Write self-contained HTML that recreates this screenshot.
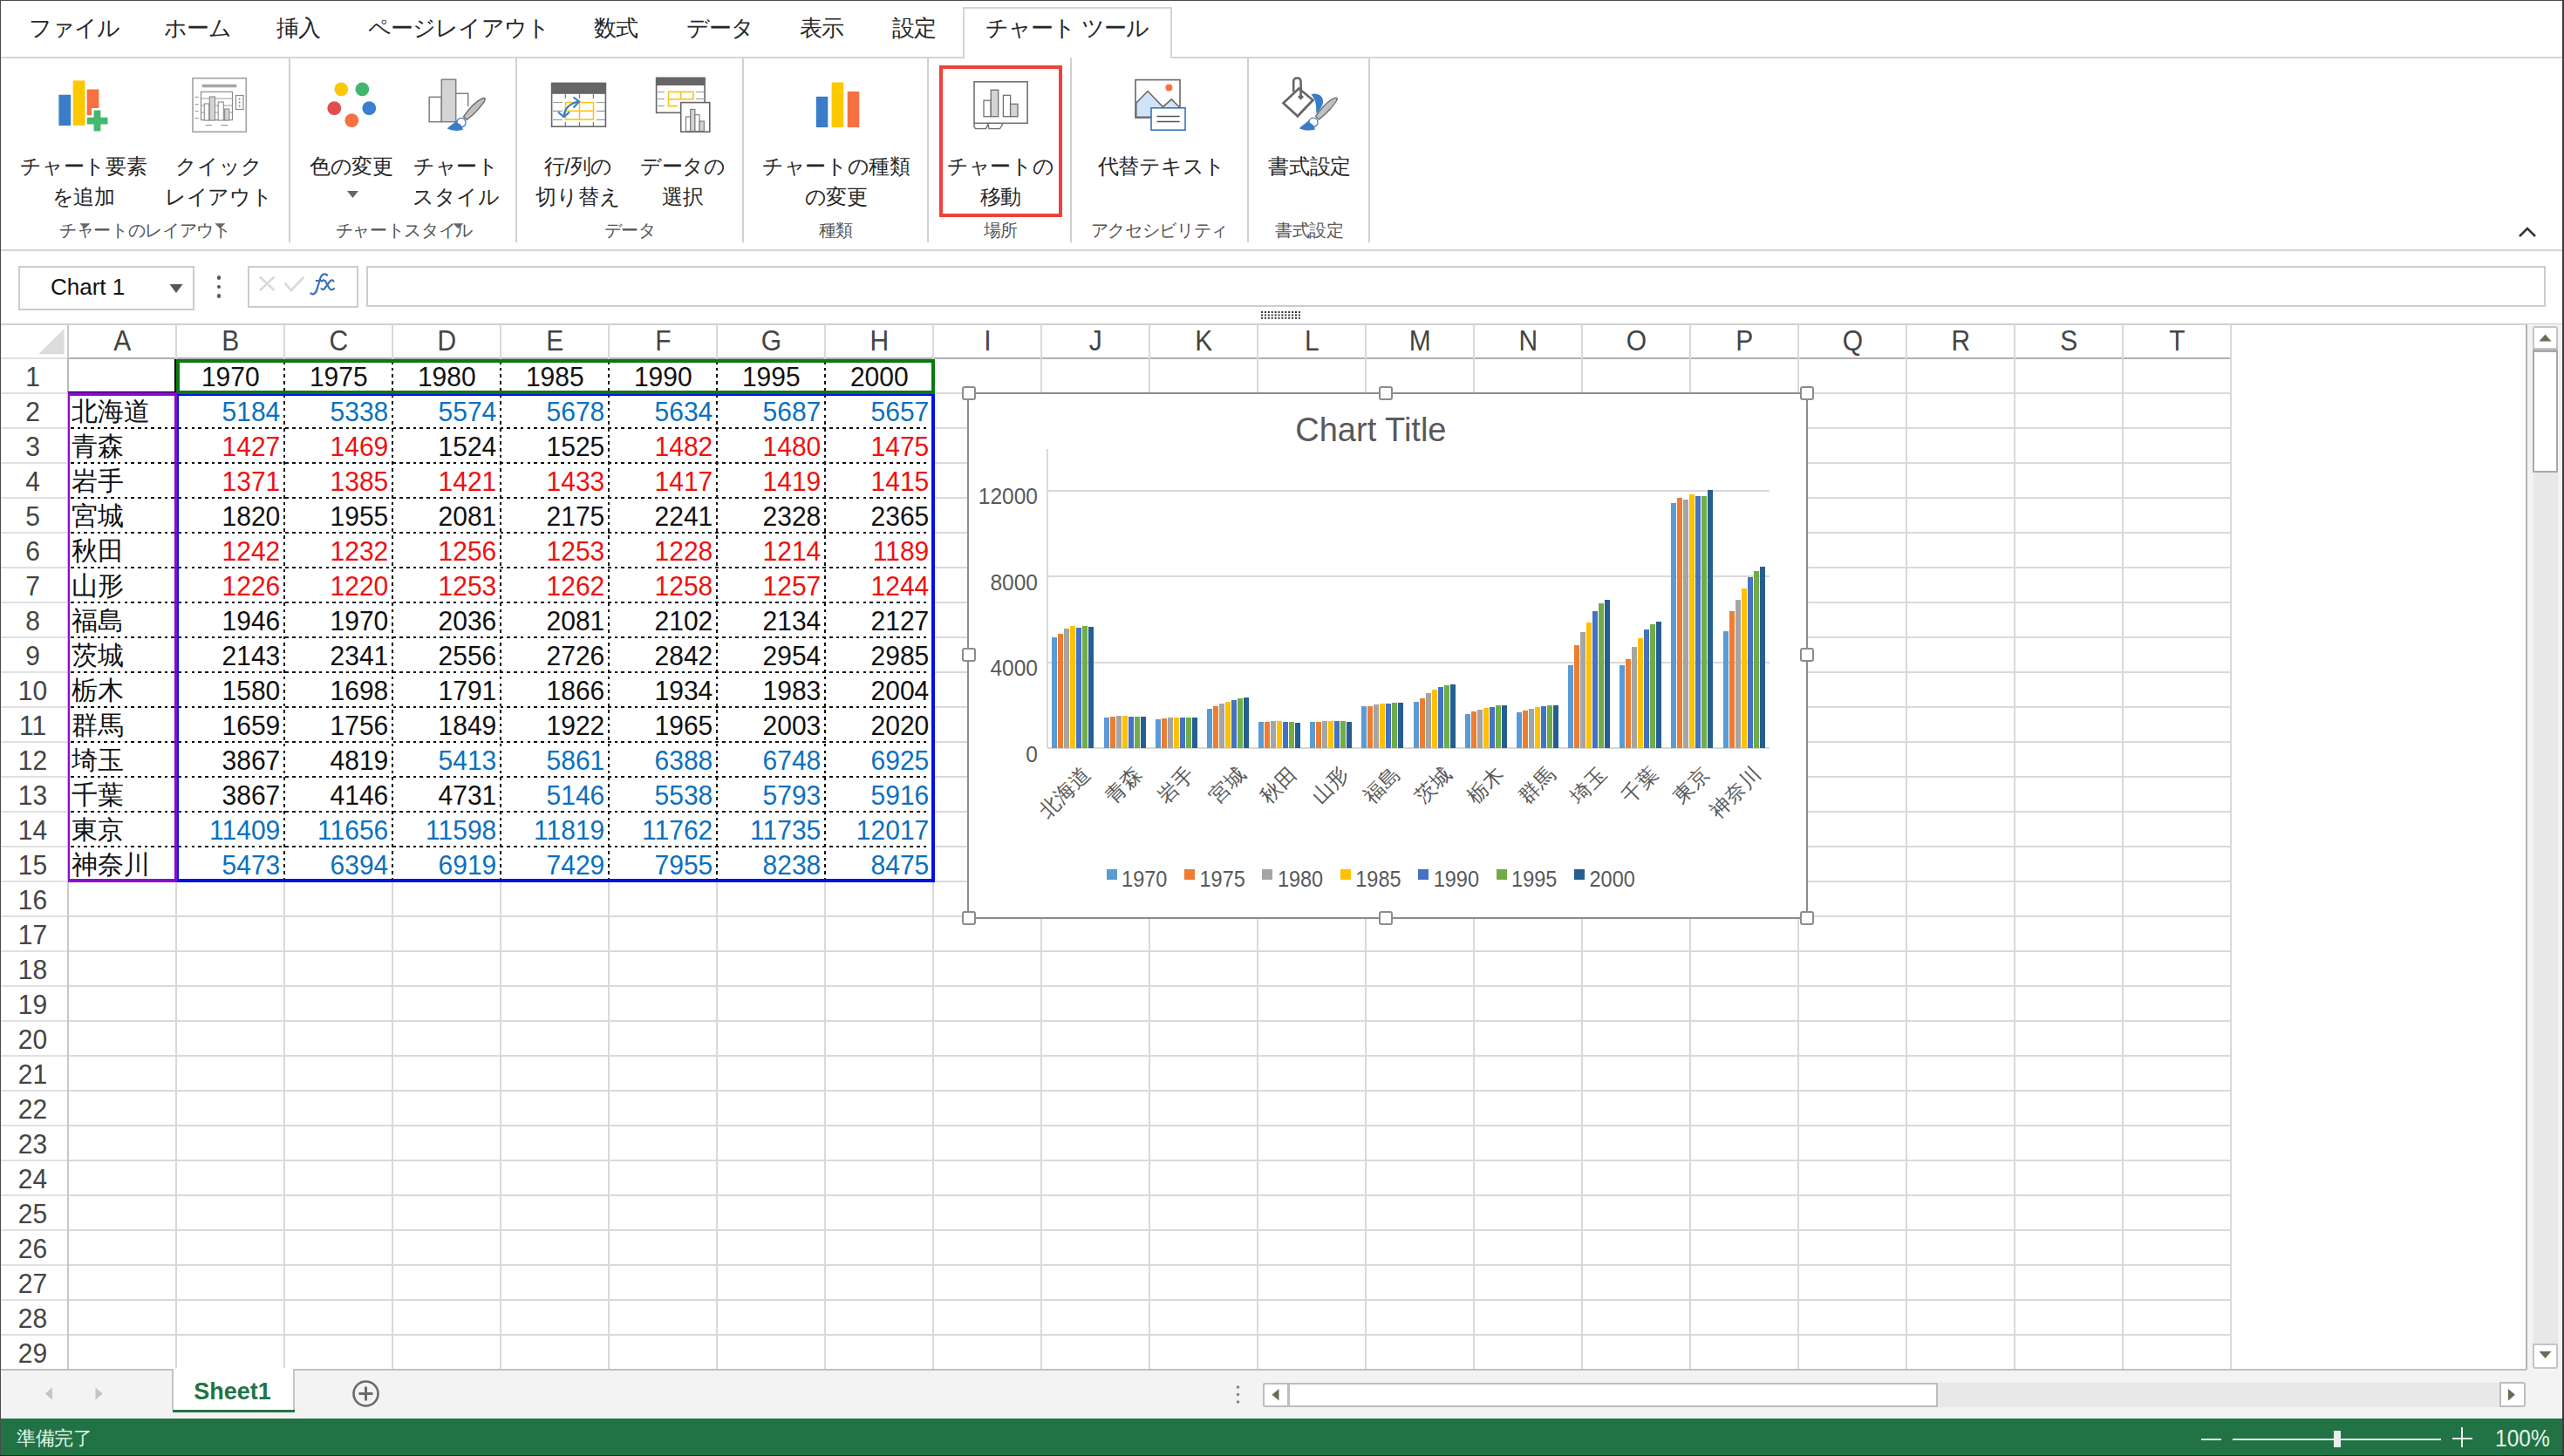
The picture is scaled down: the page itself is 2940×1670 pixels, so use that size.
<!DOCTYPE html>
<html><head><meta charset="utf-8"><style>
html,body{margin:0;padding:0;width:2940px;height:1670px;overflow:hidden;background:#fff;font-family:"Liberation Sans", sans-serif;}
#root>div,#root>svg{position:absolute;}
</style></head><body><div id="root" style="position:relative;width:2940px;height:1670px">
<div style="left:0.0px;top:64.5px;width:2940.0px;height:2.0px;background:#d5d5d5;"></div>
<div style="left:1104px;top:8px;width:240px;height:59px;box-sizing:border-box;border:2px solid #d5d5d5;border-bottom:none;background:#fff"></div>
<div style="left:32.8px;top:18.5px;font-size:26px;line-height:26px;color:#262626;white-space:nowrap;letter-spacing:-0.8px">ファイル</div>
<div style="left:187.5px;top:18.5px;font-size:26px;line-height:26px;color:#262626;white-space:nowrap;letter-spacing:-0.8px">ホーム</div>
<div style="left:316.5px;top:18.5px;font-size:26px;line-height:26px;color:#262626;white-space:nowrap;letter-spacing:-0.8px">挿入</div>
<div style="left:421.5px;top:18.5px;font-size:26px;line-height:26px;color:#262626;white-space:nowrap;letter-spacing:-0.8px">ページレイアウト</div>
<div style="left:681.0px;top:18.5px;font-size:26px;line-height:26px;color:#262626;white-space:nowrap;letter-spacing:-0.8px">数式</div>
<div style="left:786.5px;top:18.5px;font-size:26px;line-height:26px;color:#262626;white-space:nowrap;letter-spacing:-0.8px">データ</div>
<div style="left:917.0px;top:18.5px;font-size:26px;line-height:26px;color:#262626;white-space:nowrap;letter-spacing:-0.8px">表示</div>
<div style="left:1022.5px;top:18.5px;font-size:26px;line-height:26px;color:#262626;white-space:nowrap;letter-spacing:-0.8px">設定</div>
<div style="left:1129.5px;top:18.5px;font-size:26px;line-height:26px;color:#262626;white-space:nowrap;letter-spacing:-0.8px">チャート ツール</div>
<div style="left:0.0px;top:286.0px;width:2940.0px;height:2.0px;background:#d5d5d5;"></div>
<div style="left:331.3px;top:66.0px;width:2.0px;height:212.0px;background:#d0d0d0;"></div>
<div style="left:591.0px;top:66.0px;width:2.0px;height:212.0px;background:#d0d0d0;"></div>
<div style="left:851.2px;top:66.0px;width:2.0px;height:212.0px;background:#d0d0d0;"></div>
<div style="left:1063.4px;top:66.0px;width:2.0px;height:212.0px;background:#d0d0d0;"></div>
<div style="left:1227.2px;top:66.0px;width:2.0px;height:212.0px;background:#d0d0d0;"></div>
<div style="left:1430.0px;top:66.0px;width:2.0px;height:212.0px;background:#d0d0d0;"></div>
<div style="left:1569.2px;top:66.0px;width:2.0px;height:212.0px;background:#d0d0d0;"></div>
<div style="left:-54.0px;width:300px;text-align:center;top:179.5px;font-size:23.5px;line-height:23.5px;color:#262626;white-space:nowrap;letter-spacing:-0.3px;text-indent:-0.3px">チャート要素</div>
<div style="left:-54.0px;width:300px;text-align:center;top:214.5px;font-size:23.5px;line-height:23.5px;color:#262626;white-space:nowrap;letter-spacing:-0.3px;text-indent:-0.3px">を追加</div>
<div style="left:101.0px;width:300px;text-align:center;top:179.5px;font-size:23.5px;line-height:23.5px;color:#262626;white-space:nowrap;letter-spacing:-0.3px;text-indent:-0.3px">クイック</div>
<div style="left:101.0px;width:300px;text-align:center;top:214.5px;font-size:23.5px;line-height:23.5px;color:#262626;white-space:nowrap;letter-spacing:-0.3px;text-indent:-0.3px">レイアウト</div>
<div style="left:253.0px;width:300px;text-align:center;top:179.5px;font-size:23.5px;line-height:23.5px;color:#262626;white-space:nowrap;letter-spacing:-0.3px;text-indent:-0.3px">色の変更</div>
<div style="left:373.0px;width:300px;text-align:center;top:179.5px;font-size:23.5px;line-height:23.5px;color:#262626;white-space:nowrap;letter-spacing:-0.3px;text-indent:-0.3px">チャート</div>
<div style="left:373.0px;width:300px;text-align:center;top:214.5px;font-size:23.5px;line-height:23.5px;color:#262626;white-space:nowrap;letter-spacing:-0.3px;text-indent:-0.3px">スタイル</div>
<div style="left:513.0px;width:300px;text-align:center;top:179.5px;font-size:23.5px;line-height:23.5px;color:#262626;white-space:nowrap;letter-spacing:-0.3px;text-indent:-0.3px">行/列の</div>
<div style="left:513.0px;width:300px;text-align:center;top:214.5px;font-size:23.5px;line-height:23.5px;color:#262626;white-space:nowrap;letter-spacing:-0.3px;text-indent:-0.3px">切り替え</div>
<div style="left:633.0px;width:300px;text-align:center;top:179.5px;font-size:23.5px;line-height:23.5px;color:#262626;white-space:nowrap;letter-spacing:-0.3px;text-indent:-0.3px">データの</div>
<div style="left:633.0px;width:300px;text-align:center;top:214.5px;font-size:23.5px;line-height:23.5px;color:#262626;white-space:nowrap;letter-spacing:-0.3px;text-indent:-0.3px">選択</div>
<div style="left:809.0px;width:300px;text-align:center;top:179.5px;font-size:23.5px;line-height:23.5px;color:#262626;white-space:nowrap;letter-spacing:-0.3px;text-indent:-0.3px">チャートの種類</div>
<div style="left:809.0px;width:300px;text-align:center;top:214.5px;font-size:23.5px;line-height:23.5px;color:#262626;white-space:nowrap;letter-spacing:-0.3px;text-indent:-0.3px">の変更</div>
<div style="left:997.5px;width:300px;text-align:center;top:179.5px;font-size:23.5px;line-height:23.5px;color:#262626;white-space:nowrap;letter-spacing:-0.3px;text-indent:-0.3px">チャートの</div>
<div style="left:997.5px;width:300px;text-align:center;top:214.5px;font-size:23.5px;line-height:23.5px;color:#262626;white-space:nowrap;letter-spacing:-0.3px;text-indent:-0.3px">移動</div>
<div style="left:1182.0px;width:300px;text-align:center;top:179.5px;font-size:23.5px;line-height:23.5px;color:#262626;white-space:nowrap;letter-spacing:-0.3px;text-indent:-0.3px">代替テキスト</div>
<div style="left:1351.7px;width:300px;text-align:center;top:179.5px;font-size:23.5px;line-height:23.5px;color:#262626;white-space:nowrap;letter-spacing:-0.3px;text-indent:-0.3px">書式設定</div>
<div style="left:16.5px;width:300px;text-align:center;top:254.0px;font-size:20px;line-height:20px;color:#555;white-space:nowrap;letter-spacing:-0.3px;text-indent:-0.3px">チャートのレイアウト</div>
<div style="left:313.5px;width:300px;text-align:center;top:254.0px;font-size:20px;line-height:20px;color:#555;white-space:nowrap;letter-spacing:-0.3px;text-indent:-0.3px">チャートスタイル</div>
<div style="left:572.4px;width:300px;text-align:center;top:254.0px;font-size:20px;line-height:20px;color:#555;white-space:nowrap;letter-spacing:-0.3px;text-indent:-0.3px">データ</div>
<div style="left:808.6px;width:300px;text-align:center;top:254.0px;font-size:20px;line-height:20px;color:#555;white-space:nowrap;letter-spacing:-0.3px;text-indent:-0.3px">種類</div>
<div style="left:997.5px;width:300px;text-align:center;top:254.0px;font-size:20px;line-height:20px;color:#555;white-space:nowrap;letter-spacing:-0.3px;text-indent:-0.3px">場所</div>
<div style="left:1179.5px;width:300px;text-align:center;top:254.0px;font-size:20px;line-height:20px;color:#555;white-space:nowrap;letter-spacing:-0.3px;text-indent:-0.3px">アクセシビリティ</div>
<div style="left:1351.5px;width:300px;text-align:center;top:254.0px;font-size:20px;line-height:20px;color:#555;white-space:nowrap;letter-spacing:-0.3px;text-indent:-0.3px">書式設定</div>
<svg style="left:398px;top:219px" width="14" height="9"><path d="M0 0H13L6.5 8Z" fill="#666"/></svg>
<svg style="left:90.8px;top:255.5px" width="14" height="8"><path d="M0.3 0.3H12.3L6.3 6.3Z" fill="#666"/></svg>
<svg style="left:245.8px;top:255.5px" width="14" height="8"><path d="M0.3 0.3H12.3L6.3 6.3Z" fill="#666"/></svg>
<svg style="left:518.5px;top:255.5px" width="14" height="8"><path d="M0.3 0.3H12.3L6.3 6.3Z" fill="#666"/></svg>
<div style="left:1077.0px;top:75.0px;width:140.5px;height:173.5px;box-sizing:border-box;border:4px solid #f0413a;background:transparent;"></div>
<svg style="left:2886px;top:256px" width="24" height="18"><path d="M3 15L12 6L21 15" fill="none" stroke="#333" stroke-width="2.5"/></svg>

<svg style="left:0;top:0" width="1600" height="160">
 <!-- add chart element -->
 <rect x="67.4" y="108.7" width="13.8" height="35.4" fill="#3a7cc8"/>
 <rect x="83.7" y="92.4" width="13.8" height="51.7" fill="#fcc800"/>
 <path d="M99.7 102.5H113.4V124H105V132.2H99.7Z" fill="#f57142"/>
 <path d="M107.6 126.4H115.4V134.8H123.5V142.4H115.4V150.5H107.6V142.4H99.7V134.8H107.6Z" fill="#44b86f"/>
 <!-- quick layout -->
 <rect x="221" y="89.7" width="61.3" height="61.5" fill="none" stroke="#a6a6a6" stroke-width="1.7"/>
 <rect x="231.7" y="96.7" width="39.6" height="3.6" fill="#a6a6a6"/>
 <rect x="230.5" y="105.3" width="36" height="32.3" fill="none" stroke="#8a8a8a" stroke-width="1.2"/>
 <path d="M230.5 113H266.5M230.5 121H266.5M230.5 129H266.5" stroke="#9a9a9a" stroke-width="1"/>
 <rect x="234.3" y="119" width="5.4" height="19" fill="#fff" stroke="#8a8a8a" stroke-width="1.1"/>
 <rect x="240.3" y="111" width="6.2" height="27" fill="#d4d4d4" stroke="#8a8a8a" stroke-width="1.1"/>
 <rect x="250.2" y="117" width="6.1" height="21" fill="#fff" stroke="#8a8a8a" stroke-width="1.1"/>
 <rect x="257.6" y="125" width="5.2" height="13" fill="#d4d4d4" stroke="#8a8a8a" stroke-width="1.1"/>
 <path d="M223.6 111.4H227.5M223.6 119.6H227.5M223.6 127.5H227.5M223.6 135.6H227.5M235.6 143.6H243.2M253.3 143.6H261.5" stroke="#a0a0a0" stroke-width="1.2"/>
 <rect x="270.5" y="109.5" width="8.5" height="16" fill="none" stroke="#8a8a8a" stroke-width="1.2"/>
 <circle cx="274.7" cy="113.5" r="0.9" fill="#777"/><circle cx="274.7" cy="117.5" r="0.9" fill="#777"/><circle cx="274.7" cy="121.5" r="0.9" fill="#777"/>
 <!-- change colors -->
 <circle cx="391.3" cy="102.3" r="7.9" fill="#fcc800"/>
 <circle cx="415.4" cy="102.3" r="7.9" fill="#3fb86b"/>
 <circle cx="383.3" cy="124.2" r="7.9" fill="#e24d4d"/>
 <circle cx="423.3" cy="124.2" r="7.9" fill="#3b7fd0"/>
 <circle cx="403.3" cy="138.2" r="7.9" fill="#f57142"/>
 <!-- chart styles -->
 <path d="M536.7 122V107.3H522.7" fill="none" stroke="#808080" stroke-width="1.5"/>
 <rect x="492.2" y="111.3" width="14.1" height="28.4" fill="#fff" stroke="#808080" stroke-width="1.5"/>
 <rect x="506.3" y="91.2" width="16.4" height="48.5" fill="#d4d4d4" stroke="#808080" stroke-width="1.5"/>
 <g transform="translate(-977 0.3)">
 <path d="M1508.5 133.5C1515 124 1522 116 1530 112.5C1533.5 111.2 1534 113.5 1532.3 116C1527 124 1520 131 1512.5 137Z" fill="#c0c0c0" stroke="#666" stroke-width="1.3"/>
 <circle cx="1505.9" cy="140.3" r="5.2" fill="#fff" stroke="#3a7cc8" stroke-width="1.3"/>
 <path d="M1501.5 137.5C1498 141 1492.5 144 1489.8 147.3C1495 149.8 1502 150.2 1507.8 148.8C1507.5 145 1505.5 142 1501.5 140.5Z" fill="#3a7cc8"/>
 </g>
 <!-- switch row/col -->
 <rect x="632.6" y="95.4" width="61.8" height="49.8" fill="#fff" stroke="#666" stroke-width="1.6"/>
 <rect x="632.6" y="95.4" width="61.8" height="12.4" fill="#666"/>
 <path d="M634 117.5H645M684 117.5H694M634 127.3H645M684 127.3H694M634 137.3H645M684 137.3H694" stroke="#9a9a9a" stroke-width="1.2"/>
 <path d="M648.3 108V113M664.5 108V113M680.4 108V113M648.3 140V145M664.5 140V145M680.4 140V145" stroke="#777" stroke-width="1.2"/>
 <rect x="648.5" y="117.6" width="32" height="19.5" fill="none" stroke="#f5c518" stroke-width="1.6"/>
 <path d="M664.5 117.6V137.1M648.5 127.3H680.5" stroke="#f5c518" stroke-width="1.6"/>
 <path d="M646.5 133Q648 120 663 116.5" fill="none" stroke="#3a7cc8" stroke-width="2.2"/>
 <path d="M657.5 111.5L664 116.5L657.5 123.5M640 128.5L646.5 134L653 128.5" fill="none" stroke="#3a7cc8" stroke-width="2.2"/>
 <!-- select data -->
 <rect x="752.6" y="89.3" width="55.5" height="40" fill="#fff" stroke="#666" stroke-width="1.6"/>
 <rect x="752.6" y="89.3" width="55.5" height="8.7" fill="#666"/>
 <path d="M754 105.5H762M798 105.5H807M754 113.5H762M798 113.5H807M754 121.5H762" stroke="#9a9a9a" stroke-width="1.2"/>
 <rect x="766.5" y="105.3" width="28.4" height="8.5" fill="none" stroke="#f5c518" stroke-width="1.6"/>
 <path d="M780.7 105.3V113.8M766.5 113.8V121.6H777" fill="none" stroke="#f5c518" stroke-width="1.6"/>
 <rect x="780.7" y="117.6" width="33.1" height="33.6" fill="#fff" stroke="#666" stroke-width="1.6"/>
 <rect x="786.5" y="134" width="5.2" height="16.5" fill="#fff" stroke="#777" stroke-width="1.1"/>
 <rect x="791.7" y="125.4" width="5.2" height="25" fill="#d4d4d4" stroke="#777" stroke-width="1.1"/>
 <rect x="796.9" y="131.7" width="5.2" height="18.8" fill="#fff" stroke="#777" stroke-width="1.1"/>
 <rect x="802.1" y="139" width="5.2" height="11.5" fill="#d4d4d4" stroke="#777" stroke-width="1.1"/>
 <!-- change chart type -->
 <rect x="935.8" y="110.8" width="13.5" height="35.3" fill="#3a7cc8"/>
 <rect x="953.6" y="94.5" width="13.7" height="51.6" fill="#fcc800"/>
 <rect x="971.7" y="104.9" width="13.6" height="41.2" fill="#f57142"/>
 <!-- move chart -->
 <rect x="1117" y="93.8" width="61.1" height="47.5" fill="#fff" stroke="#707070" stroke-width="1.6"/>
 <rect x="1128" y="115.2" width="8.2" height="18.5" fill="#fff" stroke="#707070" stroke-width="1.3"/>
 <rect x="1136.2" y="103.2" width="8.5" height="30.5" fill="#d4d4d4" stroke="#707070" stroke-width="1.3"/>
 <rect x="1150.4" y="109.3" width="8.2" height="24.4" fill="#fff" stroke="#707070" stroke-width="1.3"/>
 <rect x="1158.6" y="119.3" width="8.4" height="14.4" fill="#d4d4d4" stroke="#707070" stroke-width="1.3"/>
 <path d="M1117 141.3V145.5L1118.5 147.6H1130.5L1133 142.5L1134 147.6H1146.5L1150 142" fill="none" stroke="#707070" stroke-width="1.4"/>
 <!-- alt text -->
 <rect x="1302" y="91.6" width="51" height="43.4" fill="#fff" stroke="#666" stroke-width="1.6"/>
 <path d="M1302.8 118.2L1316 104.6L1333.5 122.6L1343.3 113.9L1351.5 122V134.2H1302.8Z" fill="#cfe4f8" stroke="#666" stroke-width="1.5"/>
 <circle cx="1340.4" cy="100.5" r="4" fill="#f57142"/>
 <rect x="1320" y="123.8" width="39" height="25.4" fill="#fff" stroke="#3a74b5" stroke-width="1.6"/>
 <path d="M1326.4 133.5H1352.6M1326.4 139.5H1352.6" stroke="#555" stroke-width="1.5"/>
 <!-- format -->
 <path d="M1471.5 118.2L1489.3 101.5L1505.5 114.8L1487.9 133.3Z" fill="#fff" stroke="#666" stroke-width="2.7"/>
 <path d="M1483.2 105.5V94Q1483.2 89.5 1487.4 89.5Q1491.6 89.5 1491.6 94V100L1491.5 113" fill="none" stroke="#666" stroke-width="2.6"/>
 <path d="M1488 111L1491.5 114.8L1495 111L1491.5 108Z" fill="#666"/>
 <path d="M1503.5 108C1511 106 1518 110 1517 118C1516 123 1512 127 1509.5 131C1509 125 1509.5 120 1507.5 114.5Z" fill="#3a7cc8"/>
 <path d="M1508.5 133.5C1515 124 1522 116 1530 112.5C1533.5 111.2 1534 113.5 1532.3 116C1527 124 1520 131 1512.5 137Z" fill="#c0c0c0" stroke="#666" stroke-width="1.3"/>
 <circle cx="1505.9" cy="140.3" r="5.2" fill="#fff" stroke="#3a7cc8" stroke-width="1.3"/>
 <path d="M1501.5 137.5C1498 141 1492.5 144 1489.8 147.3C1495 149.8 1502 150.2 1507.8 148.8C1507.5 145 1505.5 142 1501.5 140.5Z" fill="#3a7cc8"/>
</svg>

<div style="left:20.5px;top:305.0px;width:202.0px;height:50.5px;box-sizing:border-box;border:2px solid #cdcdcd;background:#fff;"></div>
<div style="left:58.0px;top:316.0px;font-size:26px;line-height:26px;color:#111;white-space:nowrap;">Chart 1</div>
<svg style="left:194px;top:325px" width="17" height="13"><path d="M0.5 1H15.5L8 11Z" fill="#555"/></svg>
<div style="left:249.0px;top:316.3px;width:4.4px;height:4.4px;background:#555;border-radius:50%"></div>
<div style="left:249.0px;top:326.8px;width:4.4px;height:4.4px;background:#555;border-radius:50%"></div>
<div style="left:249.0px;top:337.3px;width:4.4px;height:4.4px;background:#555;border-radius:50%"></div>
<div style="left:284.0px;top:305.0px;width:127.0px;height:47.5px;box-sizing:border-box;border:2px solid #cdcdcd;background:#fff;"></div>
<svg style="left:290px;top:310px" width="110" height="36"><path d="M8 7.5L24.5 23M24.5 7.5L8 23" stroke="#d9d9d9" stroke-width="2.6"/><path d="M36.5 14.5L44 23L58.5 7.5" fill="none" stroke="#d9d9d9" stroke-width="2.6"/></svg>
<svg style="left:350px;top:310px" width="40" height="32"><g fill="none" stroke="#3a73bb" stroke-linecap="round"><path d="M6.5 26.5C9 28.5 12.5 27 14 20L17.5 8.5C19 4 22.5 3.5 25 5.5" stroke-width="2.3"/><path d="M12.5 12H20" stroke-width="1.8"/><path d="M19 12.5C21 10.5 23 11.5 24 14L27.5 20.5C29 23 31 22.8 33 21" stroke-width="2.2"/><path d="M32.5 12.5C31.5 10.8 29.5 11 28 13L22.5 20.5C21 22.5 19.5 22.5 18.5 21" stroke-width="2.2"/></g></svg>
<div style="left:420.0px;top:305.0px;width:2499.0px;height:47.0px;box-sizing:border-box;border:2px solid #cdcdcd;background:#fff;"></div>
<svg style="left:1444px;top:355px" width="52" height="11"><rect x="2.0" y="2.0" width="2" height="2" fill="#333"/><rect x="2.0" y="5.4" width="2" height="2" fill="#333"/><rect x="2.0" y="8.8" width="2" height="2" fill="#333"/><rect x="5.9" y="2.0" width="2" height="2" fill="#333"/><rect x="5.9" y="5.4" width="2" height="2" fill="#333"/><rect x="5.9" y="8.8" width="2" height="2" fill="#333"/><rect x="9.8" y="2.0" width="2" height="2" fill="#333"/><rect x="9.8" y="5.4" width="2" height="2" fill="#333"/><rect x="9.8" y="8.8" width="2" height="2" fill="#333"/><rect x="13.7" y="2.0" width="2" height="2" fill="#333"/><rect x="13.7" y="5.4" width="2" height="2" fill="#333"/><rect x="13.7" y="8.8" width="2" height="2" fill="#333"/><rect x="17.6" y="2.0" width="2" height="2" fill="#333"/><rect x="17.6" y="5.4" width="2" height="2" fill="#333"/><rect x="17.6" y="8.8" width="2" height="2" fill="#333"/><rect x="21.5" y="2.0" width="2" height="2" fill="#333"/><rect x="21.5" y="5.4" width="2" height="2" fill="#333"/><rect x="21.5" y="8.8" width="2" height="2" fill="#333"/><rect x="25.4" y="2.0" width="2" height="2" fill="#333"/><rect x="25.4" y="5.4" width="2" height="2" fill="#333"/><rect x="25.4" y="8.8" width="2" height="2" fill="#333"/><rect x="29.3" y="2.0" width="2" height="2" fill="#333"/><rect x="29.3" y="5.4" width="2" height="2" fill="#333"/><rect x="29.3" y="8.8" width="2" height="2" fill="#333"/><rect x="33.2" y="2.0" width="2" height="2" fill="#333"/><rect x="33.2" y="5.4" width="2" height="2" fill="#333"/><rect x="33.2" y="8.8" width="2" height="2" fill="#333"/><rect x="37.1" y="2.0" width="2" height="2" fill="#333"/><rect x="37.1" y="5.4" width="2" height="2" fill="#333"/><rect x="37.1" y="8.8" width="2" height="2" fill="#333"/><rect x="41.0" y="2.0" width="2" height="2" fill="#333"/><rect x="41.0" y="5.4" width="2" height="2" fill="#333"/><rect x="41.0" y="8.8" width="2" height="2" fill="#333"/><rect x="44.9" y="2.0" width="2" height="2" fill="#333"/><rect x="44.9" y="5.4" width="2" height="2" fill="#333"/><rect x="44.9" y="8.8" width="2" height="2" fill="#333"/></svg>
<div style="left:0.0px;top:370.5px;width:2940.0px;height:2.0px;background:#d0d0d0;"></div>
<div style="left:78.3px;top:410.3px;width:2480.0px;height:2.0px;background:#d9d9d9;"></div>
<div style="left:0.0px;top:410.3px;width:78.3px;height:2.0px;background:#e1e1e1;"></div>
<div style="left:78.3px;top:450.3px;width:2480.0px;height:2.0px;background:#d9d9d9;"></div>
<div style="left:0.0px;top:450.3px;width:78.3px;height:2.0px;background:#e1e1e1;"></div>
<div style="left:78.3px;top:490.3px;width:2480.0px;height:2.0px;background:#d9d9d9;"></div>
<div style="left:0.0px;top:490.3px;width:78.3px;height:2.0px;background:#e1e1e1;"></div>
<div style="left:78.3px;top:530.3px;width:2480.0px;height:2.0px;background:#d9d9d9;"></div>
<div style="left:0.0px;top:530.3px;width:78.3px;height:2.0px;background:#e1e1e1;"></div>
<div style="left:78.3px;top:570.3px;width:2480.0px;height:2.0px;background:#d9d9d9;"></div>
<div style="left:0.0px;top:570.3px;width:78.3px;height:2.0px;background:#e1e1e1;"></div>
<div style="left:78.3px;top:610.2px;width:2480.0px;height:2.0px;background:#d9d9d9;"></div>
<div style="left:0.0px;top:610.2px;width:78.3px;height:2.0px;background:#e1e1e1;"></div>
<div style="left:78.3px;top:650.2px;width:2480.0px;height:2.0px;background:#d9d9d9;"></div>
<div style="left:0.0px;top:650.2px;width:78.3px;height:2.0px;background:#e1e1e1;"></div>
<div style="left:78.3px;top:690.2px;width:2480.0px;height:2.0px;background:#d9d9d9;"></div>
<div style="left:0.0px;top:690.2px;width:78.3px;height:2.0px;background:#e1e1e1;"></div>
<div style="left:78.3px;top:730.2px;width:2480.0px;height:2.0px;background:#d9d9d9;"></div>
<div style="left:0.0px;top:730.2px;width:78.3px;height:2.0px;background:#e1e1e1;"></div>
<div style="left:78.3px;top:770.2px;width:2480.0px;height:2.0px;background:#d9d9d9;"></div>
<div style="left:0.0px;top:770.2px;width:78.3px;height:2.0px;background:#e1e1e1;"></div>
<div style="left:78.3px;top:810.2px;width:2480.0px;height:2.0px;background:#d9d9d9;"></div>
<div style="left:0.0px;top:810.2px;width:78.3px;height:2.0px;background:#e1e1e1;"></div>
<div style="left:78.3px;top:850.2px;width:2480.0px;height:2.0px;background:#d9d9d9;"></div>
<div style="left:0.0px;top:850.2px;width:78.3px;height:2.0px;background:#e1e1e1;"></div>
<div style="left:78.3px;top:890.2px;width:2480.0px;height:2.0px;background:#d9d9d9;"></div>
<div style="left:0.0px;top:890.2px;width:78.3px;height:2.0px;background:#e1e1e1;"></div>
<div style="left:78.3px;top:930.2px;width:2480.0px;height:2.0px;background:#d9d9d9;"></div>
<div style="left:0.0px;top:930.2px;width:78.3px;height:2.0px;background:#e1e1e1;"></div>
<div style="left:78.3px;top:970.2px;width:2480.0px;height:2.0px;background:#d9d9d9;"></div>
<div style="left:0.0px;top:970.2px;width:78.3px;height:2.0px;background:#e1e1e1;"></div>
<div style="left:78.3px;top:1010.2px;width:2480.0px;height:2.0px;background:#d9d9d9;"></div>
<div style="left:0.0px;top:1010.2px;width:78.3px;height:2.0px;background:#e1e1e1;"></div>
<div style="left:78.3px;top:1050.1px;width:2480.0px;height:2.0px;background:#d9d9d9;"></div>
<div style="left:0.0px;top:1050.1px;width:78.3px;height:2.0px;background:#e1e1e1;"></div>
<div style="left:78.3px;top:1090.1px;width:2480.0px;height:2.0px;background:#d9d9d9;"></div>
<div style="left:0.0px;top:1090.1px;width:78.3px;height:2.0px;background:#e1e1e1;"></div>
<div style="left:78.3px;top:1130.1px;width:2480.0px;height:2.0px;background:#d9d9d9;"></div>
<div style="left:0.0px;top:1130.1px;width:78.3px;height:2.0px;background:#e1e1e1;"></div>
<div style="left:78.3px;top:1170.1px;width:2480.0px;height:2.0px;background:#d9d9d9;"></div>
<div style="left:0.0px;top:1170.1px;width:78.3px;height:2.0px;background:#e1e1e1;"></div>
<div style="left:78.3px;top:1210.1px;width:2480.0px;height:2.0px;background:#d9d9d9;"></div>
<div style="left:0.0px;top:1210.1px;width:78.3px;height:2.0px;background:#e1e1e1;"></div>
<div style="left:78.3px;top:1250.1px;width:2480.0px;height:2.0px;background:#d9d9d9;"></div>
<div style="left:0.0px;top:1250.1px;width:78.3px;height:2.0px;background:#e1e1e1;"></div>
<div style="left:78.3px;top:1290.1px;width:2480.0px;height:2.0px;background:#d9d9d9;"></div>
<div style="left:0.0px;top:1290.1px;width:78.3px;height:2.0px;background:#e1e1e1;"></div>
<div style="left:78.3px;top:1330.1px;width:2480.0px;height:2.0px;background:#d9d9d9;"></div>
<div style="left:0.0px;top:1330.1px;width:78.3px;height:2.0px;background:#e1e1e1;"></div>
<div style="left:78.3px;top:1370.1px;width:2480.0px;height:2.0px;background:#d9d9d9;"></div>
<div style="left:0.0px;top:1370.1px;width:78.3px;height:2.0px;background:#e1e1e1;"></div>
<div style="left:78.3px;top:1410.0px;width:2480.0px;height:2.0px;background:#d9d9d9;"></div>
<div style="left:0.0px;top:1410.0px;width:78.3px;height:2.0px;background:#e1e1e1;"></div>
<div style="left:78.3px;top:1450.0px;width:2480.0px;height:2.0px;background:#d9d9d9;"></div>
<div style="left:0.0px;top:1450.0px;width:78.3px;height:2.0px;background:#e1e1e1;"></div>
<div style="left:78.3px;top:1490.0px;width:2480.0px;height:2.0px;background:#d9d9d9;"></div>
<div style="left:0.0px;top:1490.0px;width:78.3px;height:2.0px;background:#e1e1e1;"></div>
<div style="left:78.3px;top:1530.0px;width:2480.0px;height:2.0px;background:#d9d9d9;"></div>
<div style="left:0.0px;top:1530.0px;width:78.3px;height:2.0px;background:#e1e1e1;"></div>
<div style="left:78.3px;top:1570.0px;width:2480.0px;height:2.0px;background:#d9d9d9;"></div>
<div style="left:0.0px;top:1570.0px;width:78.3px;height:2.0px;background:#e1e1e1;"></div>
<div style="left:78.3px;top:410.1px;width:2480.0px;height:2.4px;background:#b0b0b0;"></div>
<div style="left:77.3px;top:372.0px;width:2.0px;height:1199.0px;background:#d9d9d9;"></div>
<div style="left:201.3px;top:372.0px;width:2.0px;height:1199.0px;background:#d9d9d9;"></div>
<div style="left:325.3px;top:372.0px;width:2.0px;height:1199.0px;background:#d9d9d9;"></div>
<div style="left:449.3px;top:372.0px;width:2.0px;height:1199.0px;background:#d9d9d9;"></div>
<div style="left:573.3px;top:372.0px;width:2.0px;height:1199.0px;background:#d9d9d9;"></div>
<div style="left:697.3px;top:372.0px;width:2.0px;height:1199.0px;background:#d9d9d9;"></div>
<div style="left:821.3px;top:372.0px;width:2.0px;height:1199.0px;background:#d9d9d9;"></div>
<div style="left:945.3px;top:372.0px;width:2.0px;height:1199.0px;background:#d9d9d9;"></div>
<div style="left:1069.3px;top:372.0px;width:2.0px;height:1199.0px;background:#d9d9d9;"></div>
<div style="left:1193.3px;top:372.0px;width:2.0px;height:1199.0px;background:#d9d9d9;"></div>
<div style="left:1317.3px;top:372.0px;width:2.0px;height:1199.0px;background:#d9d9d9;"></div>
<div style="left:1441.3px;top:372.0px;width:2.0px;height:1199.0px;background:#d9d9d9;"></div>
<div style="left:1565.3px;top:372.0px;width:2.0px;height:1199.0px;background:#d9d9d9;"></div>
<div style="left:1689.3px;top:372.0px;width:2.0px;height:1199.0px;background:#d9d9d9;"></div>
<div style="left:1813.3px;top:372.0px;width:2.0px;height:1199.0px;background:#d9d9d9;"></div>
<div style="left:1937.3px;top:372.0px;width:2.0px;height:1199.0px;background:#d9d9d9;"></div>
<div style="left:2061.3px;top:372.0px;width:2.0px;height:1199.0px;background:#d9d9d9;"></div>
<div style="left:2185.3px;top:372.0px;width:2.0px;height:1199.0px;background:#d9d9d9;"></div>
<div style="left:2309.3px;top:372.0px;width:2.0px;height:1199.0px;background:#d9d9d9;"></div>
<div style="left:2433.3px;top:372.0px;width:2.0px;height:1199.0px;background:#d9d9d9;"></div>
<div style="left:2557.3px;top:372.0px;width:2.0px;height:1199.0px;background:#d9d9d9;"></div>
<div style="left:77.3px;top:372.0px;width:2.0px;height:1199.0px;background:#c8c8c8;"></div>
<svg style="left:40px;top:374px" width="36" height="36"><path d="M4 32.2H33.6V2.9Z" fill="#dcdcdc"/></svg>
<div style="left:80.3px;width:120px;text-align:center;top:375.5px;font-size:30px;line-height:30px;color:#444;white-space:nowrap;transform:scaleY(1.08)">A</div>
<div style="left:204.3px;width:120px;text-align:center;top:375.5px;font-size:30px;line-height:30px;color:#444;white-space:nowrap;transform:scaleY(1.08)">B</div>
<div style="left:328.3px;width:120px;text-align:center;top:375.5px;font-size:30px;line-height:30px;color:#444;white-space:nowrap;transform:scaleY(1.08)">C</div>
<div style="left:452.3px;width:120px;text-align:center;top:375.5px;font-size:30px;line-height:30px;color:#444;white-space:nowrap;transform:scaleY(1.08)">D</div>
<div style="left:576.3px;width:120px;text-align:center;top:375.5px;font-size:30px;line-height:30px;color:#444;white-space:nowrap;transform:scaleY(1.08)">E</div>
<div style="left:700.3px;width:120px;text-align:center;top:375.5px;font-size:30px;line-height:30px;color:#444;white-space:nowrap;transform:scaleY(1.08)">F</div>
<div style="left:824.3px;width:120px;text-align:center;top:375.5px;font-size:30px;line-height:30px;color:#444;white-space:nowrap;transform:scaleY(1.08)">G</div>
<div style="left:948.3px;width:120px;text-align:center;top:375.5px;font-size:30px;line-height:30px;color:#444;white-space:nowrap;transform:scaleY(1.08)">H</div>
<div style="left:1072.3px;width:120px;text-align:center;top:375.5px;font-size:30px;line-height:30px;color:#444;white-space:nowrap;transform:scaleY(1.08)">I</div>
<div style="left:1196.3px;width:120px;text-align:center;top:375.5px;font-size:30px;line-height:30px;color:#444;white-space:nowrap;transform:scaleY(1.08)">J</div>
<div style="left:1320.3px;width:120px;text-align:center;top:375.5px;font-size:30px;line-height:30px;color:#444;white-space:nowrap;transform:scaleY(1.08)">K</div>
<div style="left:1444.3px;width:120px;text-align:center;top:375.5px;font-size:30px;line-height:30px;color:#444;white-space:nowrap;transform:scaleY(1.08)">L</div>
<div style="left:1568.3px;width:120px;text-align:center;top:375.5px;font-size:30px;line-height:30px;color:#444;white-space:nowrap;transform:scaleY(1.08)">M</div>
<div style="left:1692.3px;width:120px;text-align:center;top:375.5px;font-size:30px;line-height:30px;color:#444;white-space:nowrap;transform:scaleY(1.08)">N</div>
<div style="left:1816.3px;width:120px;text-align:center;top:375.5px;font-size:30px;line-height:30px;color:#444;white-space:nowrap;transform:scaleY(1.08)">O</div>
<div style="left:1940.3px;width:120px;text-align:center;top:375.5px;font-size:30px;line-height:30px;color:#444;white-space:nowrap;transform:scaleY(1.08)">P</div>
<div style="left:2064.3px;width:120px;text-align:center;top:375.5px;font-size:30px;line-height:30px;color:#444;white-space:nowrap;transform:scaleY(1.08)">Q</div>
<div style="left:2188.3px;width:120px;text-align:center;top:375.5px;font-size:30px;line-height:30px;color:#444;white-space:nowrap;transform:scaleY(1.08)">R</div>
<div style="left:2312.3px;width:120px;text-align:center;top:375.5px;font-size:30px;line-height:30px;color:#444;white-space:nowrap;transform:scaleY(1.08)">S</div>
<div style="left:2436.3px;width:120px;text-align:center;top:375.5px;font-size:30px;line-height:30px;color:#444;white-space:nowrap;transform:scaleY(1.08)">T</div>
<div style="left:-0.5px;width:76px;text-align:center;top:416.8px;font-size:30px;line-height:30px;color:#444;white-space:nowrap;transform:scaleY(1.07)">1</div>
<div style="left:-0.5px;width:76px;text-align:center;top:456.8px;font-size:30px;line-height:30px;color:#444;white-space:nowrap;transform:scaleY(1.07)">2</div>
<div style="left:-0.5px;width:76px;text-align:center;top:496.8px;font-size:30px;line-height:30px;color:#444;white-space:nowrap;transform:scaleY(1.07)">3</div>
<div style="left:-0.5px;width:76px;text-align:center;top:536.8px;font-size:30px;line-height:30px;color:#444;white-space:nowrap;transform:scaleY(1.07)">4</div>
<div style="left:-0.5px;width:76px;text-align:center;top:576.8px;font-size:30px;line-height:30px;color:#444;white-space:nowrap;transform:scaleY(1.07)">5</div>
<div style="left:-0.5px;width:76px;text-align:center;top:616.8px;font-size:30px;line-height:30px;color:#444;white-space:nowrap;transform:scaleY(1.07)">6</div>
<div style="left:-0.5px;width:76px;text-align:center;top:656.7px;font-size:30px;line-height:30px;color:#444;white-space:nowrap;transform:scaleY(1.07)">7</div>
<div style="left:-0.5px;width:76px;text-align:center;top:696.7px;font-size:30px;line-height:30px;color:#444;white-space:nowrap;transform:scaleY(1.07)">8</div>
<div style="left:-0.5px;width:76px;text-align:center;top:736.7px;font-size:30px;line-height:30px;color:#444;white-space:nowrap;transform:scaleY(1.07)">9</div>
<div style="left:-0.5px;width:76px;text-align:center;top:776.7px;font-size:30px;line-height:30px;color:#444;white-space:nowrap;transform:scaleY(1.07)">10</div>
<div style="left:-0.5px;width:76px;text-align:center;top:816.7px;font-size:30px;line-height:30px;color:#444;white-space:nowrap;transform:scaleY(1.07)">11</div>
<div style="left:-0.5px;width:76px;text-align:center;top:856.7px;font-size:30px;line-height:30px;color:#444;white-space:nowrap;transform:scaleY(1.07)">12</div>
<div style="left:-0.5px;width:76px;text-align:center;top:896.7px;font-size:30px;line-height:30px;color:#444;white-space:nowrap;transform:scaleY(1.07)">13</div>
<div style="left:-0.5px;width:76px;text-align:center;top:936.7px;font-size:30px;line-height:30px;color:#444;white-space:nowrap;transform:scaleY(1.07)">14</div>
<div style="left:-0.5px;width:76px;text-align:center;top:976.7px;font-size:30px;line-height:30px;color:#444;white-space:nowrap;transform:scaleY(1.07)">15</div>
<div style="left:-0.5px;width:76px;text-align:center;top:1016.7px;font-size:30px;line-height:30px;color:#444;white-space:nowrap;transform:scaleY(1.07)">16</div>
<div style="left:-0.5px;width:76px;text-align:center;top:1056.6px;font-size:30px;line-height:30px;color:#444;white-space:nowrap;transform:scaleY(1.07)">17</div>
<div style="left:-0.5px;width:76px;text-align:center;top:1096.6px;font-size:30px;line-height:30px;color:#444;white-space:nowrap;transform:scaleY(1.07)">18</div>
<div style="left:-0.5px;width:76px;text-align:center;top:1136.6px;font-size:30px;line-height:30px;color:#444;white-space:nowrap;transform:scaleY(1.07)">19</div>
<div style="left:-0.5px;width:76px;text-align:center;top:1176.6px;font-size:30px;line-height:30px;color:#444;white-space:nowrap;transform:scaleY(1.07)">20</div>
<div style="left:-0.5px;width:76px;text-align:center;top:1216.6px;font-size:30px;line-height:30px;color:#444;white-space:nowrap;transform:scaleY(1.07)">21</div>
<div style="left:-0.5px;width:76px;text-align:center;top:1256.6px;font-size:30px;line-height:30px;color:#444;white-space:nowrap;transform:scaleY(1.07)">22</div>
<div style="left:-0.5px;width:76px;text-align:center;top:1296.6px;font-size:30px;line-height:30px;color:#444;white-space:nowrap;transform:scaleY(1.07)">23</div>
<div style="left:-0.5px;width:76px;text-align:center;top:1336.6px;font-size:30px;line-height:30px;color:#444;white-space:nowrap;transform:scaleY(1.07)">24</div>
<div style="left:-0.5px;width:76px;text-align:center;top:1376.6px;font-size:30px;line-height:30px;color:#444;white-space:nowrap;transform:scaleY(1.07)">25</div>
<div style="left:-0.5px;width:76px;text-align:center;top:1416.5px;font-size:30px;line-height:30px;color:#444;white-space:nowrap;transform:scaleY(1.07)">26</div>
<div style="left:-0.5px;width:76px;text-align:center;top:1456.5px;font-size:30px;line-height:30px;color:#444;white-space:nowrap;transform:scaleY(1.07)">27</div>
<div style="left:-0.5px;width:76px;text-align:center;top:1496.5px;font-size:30px;line-height:30px;color:#444;white-space:nowrap;transform:scaleY(1.07)">28</div>
<div style="left:-0.5px;width:76px;text-align:center;top:1536.5px;font-size:30px;line-height:30px;color:#444;white-space:nowrap;transform:scaleY(1.07)">29</div>
<div style="left:79.3px;top:412.3px;width:990.0px;height:597.9px;background:#fff;"></div>
<div style="left:81.3px;top:490.3px;width:986.0px;height:2px;background:repeating-linear-gradient(90deg,#111 0 3.6px,transparent 3.6px 7.7px)"></div>
<div style="left:81.3px;top:530.3px;width:986.0px;height:2px;background:repeating-linear-gradient(90deg,#111 0 3.6px,transparent 3.6px 7.7px)"></div>
<div style="left:81.3px;top:570.3px;width:986.0px;height:2px;background:repeating-linear-gradient(90deg,#111 0 3.6px,transparent 3.6px 7.7px)"></div>
<div style="left:81.3px;top:610.2px;width:986.0px;height:2px;background:repeating-linear-gradient(90deg,#111 0 3.6px,transparent 3.6px 7.7px)"></div>
<div style="left:81.3px;top:650.2px;width:986.0px;height:2px;background:repeating-linear-gradient(90deg,#111 0 3.6px,transparent 3.6px 7.7px)"></div>
<div style="left:81.3px;top:690.2px;width:986.0px;height:2px;background:repeating-linear-gradient(90deg,#111 0 3.6px,transparent 3.6px 7.7px)"></div>
<div style="left:81.3px;top:730.2px;width:986.0px;height:2px;background:repeating-linear-gradient(90deg,#111 0 3.6px,transparent 3.6px 7.7px)"></div>
<div style="left:81.3px;top:770.2px;width:986.0px;height:2px;background:repeating-linear-gradient(90deg,#111 0 3.6px,transparent 3.6px 7.7px)"></div>
<div style="left:81.3px;top:810.2px;width:986.0px;height:2px;background:repeating-linear-gradient(90deg,#111 0 3.6px,transparent 3.6px 7.7px)"></div>
<div style="left:81.3px;top:850.2px;width:986.0px;height:2px;background:repeating-linear-gradient(90deg,#111 0 3.6px,transparent 3.6px 7.7px)"></div>
<div style="left:81.3px;top:890.2px;width:986.0px;height:2px;background:repeating-linear-gradient(90deg,#111 0 3.6px,transparent 3.6px 7.7px)"></div>
<div style="left:81.3px;top:930.2px;width:986.0px;height:2px;background:repeating-linear-gradient(90deg,#111 0 3.6px,transparent 3.6px 7.7px)"></div>
<div style="left:81.3px;top:970.2px;width:986.0px;height:2px;background:repeating-linear-gradient(90deg,#111 0 3.6px,transparent 3.6px 7.7px)"></div>
<div style="left:325.3px;top:414.3px;width:2px;height:593.9px;background:repeating-linear-gradient(180deg,#111 0 3.6px,transparent 3.6px 7.7px)"></div>
<div style="left:449.3px;top:414.3px;width:2px;height:593.9px;background:repeating-linear-gradient(180deg,#111 0 3.6px,transparent 3.6px 7.7px)"></div>
<div style="left:573.3px;top:414.3px;width:2px;height:593.9px;background:repeating-linear-gradient(180deg,#111 0 3.6px,transparent 3.6px 7.7px)"></div>
<div style="left:697.3px;top:414.3px;width:2px;height:593.9px;background:repeating-linear-gradient(180deg,#111 0 3.6px,transparent 3.6px 7.7px)"></div>
<div style="left:821.3px;top:414.3px;width:2px;height:593.9px;background:repeating-linear-gradient(180deg,#111 0 3.6px,transparent 3.6px 7.7px)"></div>
<div style="left:945.3px;top:414.3px;width:2px;height:593.9px;background:repeating-linear-gradient(180deg,#111 0 3.6px,transparent 3.6px 7.7px)"></div>
<div style="left:77.3px;top:411.3px;width:2.0px;height:40.0px;background:#bbb;"></div>
<div style="left:199.8px;top:412.3px;width:2.5px;height:39.0px;background:#000;"></div>
<div style="left:78.3px;top:448.8px;width:124.0px;height:2.5px;background:#000;"></div>
<div style="left:202.3px;top:411.8px;width:869.5px;height:40.5px;box-sizing:border-box;border:4px solid #0a7a10;background:transparent;"></div>
<div style="left:78.3px;top:450.3px;width:126.0px;height:561.9px;box-sizing:border-box;border:2.5px solid #8a0ad0;border-top-width:4px;border-right-width:4px;border-bottom-width:4px"></div>
<div style="left:203.3px;top:452.3px;width:868.5px;height:559.9px;box-sizing:border-box;border:2.5px solid #0010e8;border-left-width:2.5px;border-top-width:2.5px;border-right-width:4px;border-bottom-width:4px"></div>
<div style="left:204.3px;width:120px;text-align:center;top:417.3px;font-size:30px;line-height:30px;color:#111;white-space:nowrap;transform:scaleY(1.07)">1970</div>
<div style="left:328.3px;width:120px;text-align:center;top:417.3px;font-size:30px;line-height:30px;color:#111;white-space:nowrap;transform:scaleY(1.07)">1975</div>
<div style="left:452.3px;width:120px;text-align:center;top:417.3px;font-size:30px;line-height:30px;color:#111;white-space:nowrap;transform:scaleY(1.07)">1980</div>
<div style="left:576.3px;width:120px;text-align:center;top:417.3px;font-size:30px;line-height:30px;color:#111;white-space:nowrap;transform:scaleY(1.07)">1985</div>
<div style="left:700.3px;width:120px;text-align:center;top:417.3px;font-size:30px;line-height:30px;color:#111;white-space:nowrap;transform:scaleY(1.07)">1990</div>
<div style="left:824.3px;width:120px;text-align:center;top:417.3px;font-size:30px;line-height:30px;color:#111;white-space:nowrap;transform:scaleY(1.07)">1995</div>
<div style="left:948.3px;width:120px;text-align:center;top:417.3px;font-size:30px;line-height:30px;color:#111;white-space:nowrap;transform:scaleY(1.07)">2000</div>
<div style="left:82.3px;top:456.8px;font-size:29.5px;line-height:29.5px;color:#111;white-space:nowrap;">北海道</div>
<div style="left:201.3px;width:120px;text-align:right;top:457.3px;font-size:30px;line-height:30px;color:#0a70c0;white-space:nowrap;transform:scaleY(1.07)">5184</div>
<div style="left:325.3px;width:120px;text-align:right;top:457.3px;font-size:30px;line-height:30px;color:#0a70c0;white-space:nowrap;transform:scaleY(1.07)">5338</div>
<div style="left:449.3px;width:120px;text-align:right;top:457.3px;font-size:30px;line-height:30px;color:#0a70c0;white-space:nowrap;transform:scaleY(1.07)">5574</div>
<div style="left:573.3px;width:120px;text-align:right;top:457.3px;font-size:30px;line-height:30px;color:#0a70c0;white-space:nowrap;transform:scaleY(1.07)">5678</div>
<div style="left:697.3px;width:120px;text-align:right;top:457.3px;font-size:30px;line-height:30px;color:#0a70c0;white-space:nowrap;transform:scaleY(1.07)">5634</div>
<div style="left:821.3px;width:120px;text-align:right;top:457.3px;font-size:30px;line-height:30px;color:#0a70c0;white-space:nowrap;transform:scaleY(1.07)">5687</div>
<div style="left:945.3px;width:120px;text-align:right;top:457.3px;font-size:30px;line-height:30px;color:#0a70c0;white-space:nowrap;transform:scaleY(1.07)">5657</div>
<div style="left:82.3px;top:496.8px;font-size:29.5px;line-height:29.5px;color:#111;white-space:nowrap;">青森</div>
<div style="left:201.3px;width:120px;text-align:right;top:497.3px;font-size:30px;line-height:30px;color:#ee1111;white-space:nowrap;transform:scaleY(1.07)">1427</div>
<div style="left:325.3px;width:120px;text-align:right;top:497.3px;font-size:30px;line-height:30px;color:#ee1111;white-space:nowrap;transform:scaleY(1.07)">1469</div>
<div style="left:449.3px;width:120px;text-align:right;top:497.3px;font-size:30px;line-height:30px;color:#111;white-space:nowrap;transform:scaleY(1.07)">1524</div>
<div style="left:573.3px;width:120px;text-align:right;top:497.3px;font-size:30px;line-height:30px;color:#111;white-space:nowrap;transform:scaleY(1.07)">1525</div>
<div style="left:697.3px;width:120px;text-align:right;top:497.3px;font-size:30px;line-height:30px;color:#ee1111;white-space:nowrap;transform:scaleY(1.07)">1482</div>
<div style="left:821.3px;width:120px;text-align:right;top:497.3px;font-size:30px;line-height:30px;color:#ee1111;white-space:nowrap;transform:scaleY(1.07)">1480</div>
<div style="left:945.3px;width:120px;text-align:right;top:497.3px;font-size:30px;line-height:30px;color:#ee1111;white-space:nowrap;transform:scaleY(1.07)">1475</div>
<div style="left:82.3px;top:536.8px;font-size:29.5px;line-height:29.5px;color:#111;white-space:nowrap;">岩手</div>
<div style="left:201.3px;width:120px;text-align:right;top:537.3px;font-size:30px;line-height:30px;color:#ee1111;white-space:nowrap;transform:scaleY(1.07)">1371</div>
<div style="left:325.3px;width:120px;text-align:right;top:537.3px;font-size:30px;line-height:30px;color:#ee1111;white-space:nowrap;transform:scaleY(1.07)">1385</div>
<div style="left:449.3px;width:120px;text-align:right;top:537.3px;font-size:30px;line-height:30px;color:#ee1111;white-space:nowrap;transform:scaleY(1.07)">1421</div>
<div style="left:573.3px;width:120px;text-align:right;top:537.3px;font-size:30px;line-height:30px;color:#ee1111;white-space:nowrap;transform:scaleY(1.07)">1433</div>
<div style="left:697.3px;width:120px;text-align:right;top:537.3px;font-size:30px;line-height:30px;color:#ee1111;white-space:nowrap;transform:scaleY(1.07)">1417</div>
<div style="left:821.3px;width:120px;text-align:right;top:537.3px;font-size:30px;line-height:30px;color:#ee1111;white-space:nowrap;transform:scaleY(1.07)">1419</div>
<div style="left:945.3px;width:120px;text-align:right;top:537.3px;font-size:30px;line-height:30px;color:#ee1111;white-space:nowrap;transform:scaleY(1.07)">1415</div>
<div style="left:82.3px;top:576.8px;font-size:29.5px;line-height:29.5px;color:#111;white-space:nowrap;">宮城</div>
<div style="left:201.3px;width:120px;text-align:right;top:577.3px;font-size:30px;line-height:30px;color:#111;white-space:nowrap;transform:scaleY(1.07)">1820</div>
<div style="left:325.3px;width:120px;text-align:right;top:577.3px;font-size:30px;line-height:30px;color:#111;white-space:nowrap;transform:scaleY(1.07)">1955</div>
<div style="left:449.3px;width:120px;text-align:right;top:577.3px;font-size:30px;line-height:30px;color:#111;white-space:nowrap;transform:scaleY(1.07)">2081</div>
<div style="left:573.3px;width:120px;text-align:right;top:577.3px;font-size:30px;line-height:30px;color:#111;white-space:nowrap;transform:scaleY(1.07)">2175</div>
<div style="left:697.3px;width:120px;text-align:right;top:577.3px;font-size:30px;line-height:30px;color:#111;white-space:nowrap;transform:scaleY(1.07)">2241</div>
<div style="left:821.3px;width:120px;text-align:right;top:577.3px;font-size:30px;line-height:30px;color:#111;white-space:nowrap;transform:scaleY(1.07)">2328</div>
<div style="left:945.3px;width:120px;text-align:right;top:577.3px;font-size:30px;line-height:30px;color:#111;white-space:nowrap;transform:scaleY(1.07)">2365</div>
<div style="left:82.3px;top:616.8px;font-size:29.5px;line-height:29.5px;color:#111;white-space:nowrap;">秋田</div>
<div style="left:201.3px;width:120px;text-align:right;top:617.2px;font-size:30px;line-height:30px;color:#ee1111;white-space:nowrap;transform:scaleY(1.07)">1242</div>
<div style="left:325.3px;width:120px;text-align:right;top:617.2px;font-size:30px;line-height:30px;color:#ee1111;white-space:nowrap;transform:scaleY(1.07)">1232</div>
<div style="left:449.3px;width:120px;text-align:right;top:617.2px;font-size:30px;line-height:30px;color:#ee1111;white-space:nowrap;transform:scaleY(1.07)">1256</div>
<div style="left:573.3px;width:120px;text-align:right;top:617.2px;font-size:30px;line-height:30px;color:#ee1111;white-space:nowrap;transform:scaleY(1.07)">1253</div>
<div style="left:697.3px;width:120px;text-align:right;top:617.2px;font-size:30px;line-height:30px;color:#ee1111;white-space:nowrap;transform:scaleY(1.07)">1228</div>
<div style="left:821.3px;width:120px;text-align:right;top:617.2px;font-size:30px;line-height:30px;color:#ee1111;white-space:nowrap;transform:scaleY(1.07)">1214</div>
<div style="left:945.3px;width:120px;text-align:right;top:617.2px;font-size:30px;line-height:30px;color:#ee1111;white-space:nowrap;transform:scaleY(1.07)">1189</div>
<div style="left:82.3px;top:656.7px;font-size:29.5px;line-height:29.5px;color:#111;white-space:nowrap;">山形</div>
<div style="left:201.3px;width:120px;text-align:right;top:657.2px;font-size:30px;line-height:30px;color:#ee1111;white-space:nowrap;transform:scaleY(1.07)">1226</div>
<div style="left:325.3px;width:120px;text-align:right;top:657.2px;font-size:30px;line-height:30px;color:#ee1111;white-space:nowrap;transform:scaleY(1.07)">1220</div>
<div style="left:449.3px;width:120px;text-align:right;top:657.2px;font-size:30px;line-height:30px;color:#ee1111;white-space:nowrap;transform:scaleY(1.07)">1253</div>
<div style="left:573.3px;width:120px;text-align:right;top:657.2px;font-size:30px;line-height:30px;color:#ee1111;white-space:nowrap;transform:scaleY(1.07)">1262</div>
<div style="left:697.3px;width:120px;text-align:right;top:657.2px;font-size:30px;line-height:30px;color:#ee1111;white-space:nowrap;transform:scaleY(1.07)">1258</div>
<div style="left:821.3px;width:120px;text-align:right;top:657.2px;font-size:30px;line-height:30px;color:#ee1111;white-space:nowrap;transform:scaleY(1.07)">1257</div>
<div style="left:945.3px;width:120px;text-align:right;top:657.2px;font-size:30px;line-height:30px;color:#ee1111;white-space:nowrap;transform:scaleY(1.07)">1244</div>
<div style="left:82.3px;top:696.7px;font-size:29.5px;line-height:29.5px;color:#111;white-space:nowrap;">福島</div>
<div style="left:201.3px;width:120px;text-align:right;top:697.2px;font-size:30px;line-height:30px;color:#111;white-space:nowrap;transform:scaleY(1.07)">1946</div>
<div style="left:325.3px;width:120px;text-align:right;top:697.2px;font-size:30px;line-height:30px;color:#111;white-space:nowrap;transform:scaleY(1.07)">1970</div>
<div style="left:449.3px;width:120px;text-align:right;top:697.2px;font-size:30px;line-height:30px;color:#111;white-space:nowrap;transform:scaleY(1.07)">2036</div>
<div style="left:573.3px;width:120px;text-align:right;top:697.2px;font-size:30px;line-height:30px;color:#111;white-space:nowrap;transform:scaleY(1.07)">2081</div>
<div style="left:697.3px;width:120px;text-align:right;top:697.2px;font-size:30px;line-height:30px;color:#111;white-space:nowrap;transform:scaleY(1.07)">2102</div>
<div style="left:821.3px;width:120px;text-align:right;top:697.2px;font-size:30px;line-height:30px;color:#111;white-space:nowrap;transform:scaleY(1.07)">2134</div>
<div style="left:945.3px;width:120px;text-align:right;top:697.2px;font-size:30px;line-height:30px;color:#111;white-space:nowrap;transform:scaleY(1.07)">2127</div>
<div style="left:82.3px;top:736.7px;font-size:29.5px;line-height:29.5px;color:#111;white-space:nowrap;">茨城</div>
<div style="left:201.3px;width:120px;text-align:right;top:737.2px;font-size:30px;line-height:30px;color:#111;white-space:nowrap;transform:scaleY(1.07)">2143</div>
<div style="left:325.3px;width:120px;text-align:right;top:737.2px;font-size:30px;line-height:30px;color:#111;white-space:nowrap;transform:scaleY(1.07)">2341</div>
<div style="left:449.3px;width:120px;text-align:right;top:737.2px;font-size:30px;line-height:30px;color:#111;white-space:nowrap;transform:scaleY(1.07)">2556</div>
<div style="left:573.3px;width:120px;text-align:right;top:737.2px;font-size:30px;line-height:30px;color:#111;white-space:nowrap;transform:scaleY(1.07)">2726</div>
<div style="left:697.3px;width:120px;text-align:right;top:737.2px;font-size:30px;line-height:30px;color:#111;white-space:nowrap;transform:scaleY(1.07)">2842</div>
<div style="left:821.3px;width:120px;text-align:right;top:737.2px;font-size:30px;line-height:30px;color:#111;white-space:nowrap;transform:scaleY(1.07)">2954</div>
<div style="left:945.3px;width:120px;text-align:right;top:737.2px;font-size:30px;line-height:30px;color:#111;white-space:nowrap;transform:scaleY(1.07)">2985</div>
<div style="left:82.3px;top:776.7px;font-size:29.5px;line-height:29.5px;color:#111;white-space:nowrap;">栃木</div>
<div style="left:201.3px;width:120px;text-align:right;top:777.2px;font-size:30px;line-height:30px;color:#111;white-space:nowrap;transform:scaleY(1.07)">1580</div>
<div style="left:325.3px;width:120px;text-align:right;top:777.2px;font-size:30px;line-height:30px;color:#111;white-space:nowrap;transform:scaleY(1.07)">1698</div>
<div style="left:449.3px;width:120px;text-align:right;top:777.2px;font-size:30px;line-height:30px;color:#111;white-space:nowrap;transform:scaleY(1.07)">1791</div>
<div style="left:573.3px;width:120px;text-align:right;top:777.2px;font-size:30px;line-height:30px;color:#111;white-space:nowrap;transform:scaleY(1.07)">1866</div>
<div style="left:697.3px;width:120px;text-align:right;top:777.2px;font-size:30px;line-height:30px;color:#111;white-space:nowrap;transform:scaleY(1.07)">1934</div>
<div style="left:821.3px;width:120px;text-align:right;top:777.2px;font-size:30px;line-height:30px;color:#111;white-space:nowrap;transform:scaleY(1.07)">1983</div>
<div style="left:945.3px;width:120px;text-align:right;top:777.2px;font-size:30px;line-height:30px;color:#111;white-space:nowrap;transform:scaleY(1.07)">2004</div>
<div style="left:82.3px;top:816.7px;font-size:29.5px;line-height:29.5px;color:#111;white-space:nowrap;">群馬</div>
<div style="left:201.3px;width:120px;text-align:right;top:817.2px;font-size:30px;line-height:30px;color:#111;white-space:nowrap;transform:scaleY(1.07)">1659</div>
<div style="left:325.3px;width:120px;text-align:right;top:817.2px;font-size:30px;line-height:30px;color:#111;white-space:nowrap;transform:scaleY(1.07)">1756</div>
<div style="left:449.3px;width:120px;text-align:right;top:817.2px;font-size:30px;line-height:30px;color:#111;white-space:nowrap;transform:scaleY(1.07)">1849</div>
<div style="left:573.3px;width:120px;text-align:right;top:817.2px;font-size:30px;line-height:30px;color:#111;white-space:nowrap;transform:scaleY(1.07)">1922</div>
<div style="left:697.3px;width:120px;text-align:right;top:817.2px;font-size:30px;line-height:30px;color:#111;white-space:nowrap;transform:scaleY(1.07)">1965</div>
<div style="left:821.3px;width:120px;text-align:right;top:817.2px;font-size:30px;line-height:30px;color:#111;white-space:nowrap;transform:scaleY(1.07)">2003</div>
<div style="left:945.3px;width:120px;text-align:right;top:817.2px;font-size:30px;line-height:30px;color:#111;white-space:nowrap;transform:scaleY(1.07)">2020</div>
<div style="left:82.3px;top:856.7px;font-size:29.5px;line-height:29.5px;color:#111;white-space:nowrap;">埼玉</div>
<div style="left:201.3px;width:120px;text-align:right;top:857.2px;font-size:30px;line-height:30px;color:#111;white-space:nowrap;transform:scaleY(1.07)">3867</div>
<div style="left:325.3px;width:120px;text-align:right;top:857.2px;font-size:30px;line-height:30px;color:#111;white-space:nowrap;transform:scaleY(1.07)">4819</div>
<div style="left:449.3px;width:120px;text-align:right;top:857.2px;font-size:30px;line-height:30px;color:#0a70c0;white-space:nowrap;transform:scaleY(1.07)">5413</div>
<div style="left:573.3px;width:120px;text-align:right;top:857.2px;font-size:30px;line-height:30px;color:#0a70c0;white-space:nowrap;transform:scaleY(1.07)">5861</div>
<div style="left:697.3px;width:120px;text-align:right;top:857.2px;font-size:30px;line-height:30px;color:#0a70c0;white-space:nowrap;transform:scaleY(1.07)">6388</div>
<div style="left:821.3px;width:120px;text-align:right;top:857.2px;font-size:30px;line-height:30px;color:#0a70c0;white-space:nowrap;transform:scaleY(1.07)">6748</div>
<div style="left:945.3px;width:120px;text-align:right;top:857.2px;font-size:30px;line-height:30px;color:#0a70c0;white-space:nowrap;transform:scaleY(1.07)">6925</div>
<div style="left:82.3px;top:896.7px;font-size:29.5px;line-height:29.5px;color:#111;white-space:nowrap;">千葉</div>
<div style="left:201.3px;width:120px;text-align:right;top:897.2px;font-size:30px;line-height:30px;color:#111;white-space:nowrap;transform:scaleY(1.07)">3867</div>
<div style="left:325.3px;width:120px;text-align:right;top:897.2px;font-size:30px;line-height:30px;color:#111;white-space:nowrap;transform:scaleY(1.07)">4146</div>
<div style="left:449.3px;width:120px;text-align:right;top:897.2px;font-size:30px;line-height:30px;color:#111;white-space:nowrap;transform:scaleY(1.07)">4731</div>
<div style="left:573.3px;width:120px;text-align:right;top:897.2px;font-size:30px;line-height:30px;color:#0a70c0;white-space:nowrap;transform:scaleY(1.07)">5146</div>
<div style="left:697.3px;width:120px;text-align:right;top:897.2px;font-size:30px;line-height:30px;color:#0a70c0;white-space:nowrap;transform:scaleY(1.07)">5538</div>
<div style="left:821.3px;width:120px;text-align:right;top:897.2px;font-size:30px;line-height:30px;color:#0a70c0;white-space:nowrap;transform:scaleY(1.07)">5793</div>
<div style="left:945.3px;width:120px;text-align:right;top:897.2px;font-size:30px;line-height:30px;color:#0a70c0;white-space:nowrap;transform:scaleY(1.07)">5916</div>
<div style="left:82.3px;top:936.7px;font-size:29.5px;line-height:29.5px;color:#111;white-space:nowrap;">東京</div>
<div style="left:201.3px;width:120px;text-align:right;top:937.2px;font-size:30px;line-height:30px;color:#0a70c0;white-space:nowrap;transform:scaleY(1.07)">11409</div>
<div style="left:325.3px;width:120px;text-align:right;top:937.2px;font-size:30px;line-height:30px;color:#0a70c0;white-space:nowrap;transform:scaleY(1.07)">11656</div>
<div style="left:449.3px;width:120px;text-align:right;top:937.2px;font-size:30px;line-height:30px;color:#0a70c0;white-space:nowrap;transform:scaleY(1.07)">11598</div>
<div style="left:573.3px;width:120px;text-align:right;top:937.2px;font-size:30px;line-height:30px;color:#0a70c0;white-space:nowrap;transform:scaleY(1.07)">11819</div>
<div style="left:697.3px;width:120px;text-align:right;top:937.2px;font-size:30px;line-height:30px;color:#0a70c0;white-space:nowrap;transform:scaleY(1.07)">11762</div>
<div style="left:821.3px;width:120px;text-align:right;top:937.2px;font-size:30px;line-height:30px;color:#0a70c0;white-space:nowrap;transform:scaleY(1.07)">11735</div>
<div style="left:945.3px;width:120px;text-align:right;top:937.2px;font-size:30px;line-height:30px;color:#0a70c0;white-space:nowrap;transform:scaleY(1.07)">12017</div>
<div style="left:82.3px;top:976.7px;font-size:29.5px;line-height:29.5px;color:#111;white-space:nowrap;">神奈川</div>
<div style="left:201.3px;width:120px;text-align:right;top:977.2px;font-size:30px;line-height:30px;color:#0a70c0;white-space:nowrap;transform:scaleY(1.07)">5473</div>
<div style="left:325.3px;width:120px;text-align:right;top:977.2px;font-size:30px;line-height:30px;color:#0a70c0;white-space:nowrap;transform:scaleY(1.07)">6394</div>
<div style="left:449.3px;width:120px;text-align:right;top:977.2px;font-size:30px;line-height:30px;color:#0a70c0;white-space:nowrap;transform:scaleY(1.07)">6919</div>
<div style="left:573.3px;width:120px;text-align:right;top:977.2px;font-size:30px;line-height:30px;color:#0a70c0;white-space:nowrap;transform:scaleY(1.07)">7429</div>
<div style="left:697.3px;width:120px;text-align:right;top:977.2px;font-size:30px;line-height:30px;color:#0a70c0;white-space:nowrap;transform:scaleY(1.07)">7955</div>
<div style="left:821.3px;width:120px;text-align:right;top:977.2px;font-size:30px;line-height:30px;color:#0a70c0;white-space:nowrap;transform:scaleY(1.07)">8238</div>
<div style="left:945.3px;width:120px;text-align:right;top:977.2px;font-size:30px;line-height:30px;color:#0a70c0;white-space:nowrap;transform:scaleY(1.07)">8475</div>
<div style="left:1110.5px;top:451.1px;width:961.8px;height:602.1px;background:#fff;"></div>
<div style="left:1109.3px;top:449.9px;width:964.2px;height:604.5px;box-sizing:border-box;border:2.4px solid #8c8c8c;background:transparent;"></div>
<div style="left:1371.9px;width:400px;text-align:center;top:474.0px;font-size:38px;line-height:38px;color:#595959;white-space:nowrap;">Chart Title</div>
<div style="left:1070.0px;width:120px;text-align:right;top:853.7px;font-size:24.5px;line-height:24.5px;color:#595959;white-space:nowrap;transform:scaleY(1.05)">0</div>
<div style="left:1200.6px;top:758.7px;width:828.4px;height:2.0px;background:#d9d9d9;"></div>
<div style="left:1070.0px;width:120px;text-align:right;top:755.2px;font-size:24.5px;line-height:24.5px;color:#595959;white-space:nowrap;transform:scaleY(1.05)">4000</div>
<div style="left:1200.6px;top:660.3px;width:828.4px;height:2.0px;background:#d9d9d9;"></div>
<div style="left:1070.0px;width:120px;text-align:right;top:656.8px;font-size:24.5px;line-height:24.5px;color:#595959;white-space:nowrap;transform:scaleY(1.05)">8000</div>
<div style="left:1200.6px;top:561.8px;width:828.4px;height:2.0px;background:#d9d9d9;"></div>
<div style="left:1070.0px;width:120px;text-align:right;top:558.3px;font-size:24.5px;line-height:24.5px;color:#595959;white-space:nowrap;transform:scaleY(1.05)">12000</div>
<div style="left:1200.6px;top:857.2px;width:828.4px;height:2.0px;background:#d9d9d9;"></div>
<div style="left:1199.6px;top:515.0px;width:2.0px;height:343.2px;background:#d9d9d9;"></div>
<div style="left:1206.3px;top:730.6px;width:6.0px;height:127.6px;background:#5b9bd5;"></div>
<div style="left:1213.3px;top:726.8px;width:6.0px;height:131.4px;background:#ed7d31;"></div>
<div style="left:1220.3px;top:721.0px;width:6.0px;height:137.2px;background:#a5a5a5;"></div>
<div style="left:1227.3px;top:718.4px;width:6.0px;height:139.8px;background:#ffc000;"></div>
<div style="left:1234.3px;top:719.5px;width:6.0px;height:138.7px;background:#4472c4;"></div>
<div style="left:1241.3px;top:718.2px;width:6.0px;height:140.0px;background:#70ad47;"></div>
<div style="left:1248.3px;top:718.9px;width:6.0px;height:139.3px;background:#255e91;"></div>
<div style="left:838.2px;top:875.0px;width:400px;height:24px;text-align:right;font-size:23.5px;line-height:24px;color:#595959;white-space:nowrap;transform-origin:100% 0;transform:rotate(-45deg)">北海道</div>
<div style="left:1265.5px;top:823.1px;width:6.0px;height:35.1px;background:#5b9bd5;"></div>
<div style="left:1272.5px;top:822.0px;width:6.0px;height:36.2px;background:#ed7d31;"></div>
<div style="left:1279.5px;top:820.7px;width:6.0px;height:37.5px;background:#a5a5a5;"></div>
<div style="left:1286.5px;top:820.7px;width:6.0px;height:37.5px;background:#ffc000;"></div>
<div style="left:1293.5px;top:821.7px;width:6.0px;height:36.5px;background:#4472c4;"></div>
<div style="left:1300.5px;top:821.8px;width:6.0px;height:36.4px;background:#70ad47;"></div>
<div style="left:1307.5px;top:821.9px;width:6.0px;height:36.3px;background:#255e91;"></div>
<div style="left:897.4px;top:875.0px;width:400px;height:24px;text-align:right;font-size:23.5px;line-height:24px;color:#595959;white-space:nowrap;transform-origin:100% 0;transform:rotate(-45deg)">青森</div>
<div style="left:1324.6px;top:824.5px;width:6.0px;height:33.7px;background:#5b9bd5;"></div>
<div style="left:1331.6px;top:824.1px;width:6.0px;height:34.1px;background:#ed7d31;"></div>
<div style="left:1338.6px;top:823.2px;width:6.0px;height:35.0px;background:#a5a5a5;"></div>
<div style="left:1345.6px;top:822.9px;width:6.0px;height:35.3px;background:#ffc000;"></div>
<div style="left:1352.6px;top:823.3px;width:6.0px;height:34.9px;background:#4472c4;"></div>
<div style="left:1359.6px;top:823.3px;width:6.0px;height:34.9px;background:#70ad47;"></div>
<div style="left:1366.6px;top:823.4px;width:6.0px;height:34.8px;background:#255e91;"></div>
<div style="left:956.5px;top:875.0px;width:400px;height:24px;text-align:right;font-size:23.5px;line-height:24px;color:#595959;white-space:nowrap;transform-origin:100% 0;transform:rotate(-45deg)">岩手</div>
<div style="left:1383.8px;top:813.4px;width:6.0px;height:44.8px;background:#5b9bd5;"></div>
<div style="left:1390.8px;top:810.1px;width:6.0px;height:48.1px;background:#ed7d31;"></div>
<div style="left:1397.8px;top:807.0px;width:6.0px;height:51.2px;background:#a5a5a5;"></div>
<div style="left:1404.8px;top:804.7px;width:6.0px;height:53.5px;background:#ffc000;"></div>
<div style="left:1411.8px;top:803.0px;width:6.0px;height:55.2px;background:#4472c4;"></div>
<div style="left:1418.8px;top:800.9px;width:6.0px;height:57.3px;background:#70ad47;"></div>
<div style="left:1425.8px;top:800.0px;width:6.0px;height:58.2px;background:#255e91;"></div>
<div style="left:1015.7px;top:875.0px;width:400px;height:24px;text-align:right;font-size:23.5px;line-height:24px;color:#595959;white-space:nowrap;transform-origin:100% 0;transform:rotate(-45deg)">宮城</div>
<div style="left:1443.0px;top:827.6px;width:6.0px;height:30.6px;background:#5b9bd5;"></div>
<div style="left:1450.0px;top:827.9px;width:6.0px;height:30.3px;background:#ed7d31;"></div>
<div style="left:1457.0px;top:827.3px;width:6.0px;height:30.9px;background:#a5a5a5;"></div>
<div style="left:1464.0px;top:827.4px;width:6.0px;height:30.8px;background:#ffc000;"></div>
<div style="left:1471.0px;top:828.0px;width:6.0px;height:30.2px;background:#4472c4;"></div>
<div style="left:1478.0px;top:828.3px;width:6.0px;height:29.9px;background:#70ad47;"></div>
<div style="left:1485.0px;top:828.9px;width:6.0px;height:29.3px;background:#255e91;"></div>
<div style="left:1074.9px;top:875.0px;width:400px;height:24px;text-align:right;font-size:23.5px;line-height:24px;color:#595959;white-space:nowrap;transform-origin:100% 0;transform:rotate(-45deg)">秋田</div>
<div style="left:1502.1px;top:828.0px;width:6.0px;height:30.2px;background:#5b9bd5;"></div>
<div style="left:1509.1px;top:828.2px;width:6.0px;height:30.0px;background:#ed7d31;"></div>
<div style="left:1516.1px;top:827.4px;width:6.0px;height:30.8px;background:#a5a5a5;"></div>
<div style="left:1523.1px;top:827.1px;width:6.0px;height:31.1px;background:#ffc000;"></div>
<div style="left:1530.1px;top:827.2px;width:6.0px;height:31.0px;background:#4472c4;"></div>
<div style="left:1537.1px;top:827.3px;width:6.0px;height:30.9px;background:#70ad47;"></div>
<div style="left:1544.1px;top:827.6px;width:6.0px;height:30.6px;background:#255e91;"></div>
<div style="left:1134.0px;top:875.0px;width:400px;height:24px;text-align:right;font-size:23.5px;line-height:24px;color:#595959;white-space:nowrap;transform-origin:100% 0;transform:rotate(-45deg)">山形</div>
<div style="left:1561.3px;top:810.3px;width:6.0px;height:47.9px;background:#5b9bd5;"></div>
<div style="left:1568.3px;top:809.7px;width:6.0px;height:48.5px;background:#ed7d31;"></div>
<div style="left:1575.3px;top:808.1px;width:6.0px;height:50.1px;background:#a5a5a5;"></div>
<div style="left:1582.3px;top:807.0px;width:6.0px;height:51.2px;background:#ffc000;"></div>
<div style="left:1589.3px;top:806.5px;width:6.0px;height:51.7px;background:#4472c4;"></div>
<div style="left:1596.3px;top:805.7px;width:6.0px;height:52.5px;background:#70ad47;"></div>
<div style="left:1603.3px;top:805.8px;width:6.0px;height:52.4px;background:#255e91;"></div>
<div style="left:1193.2px;top:875.0px;width:400px;height:24px;text-align:right;font-size:23.5px;line-height:24px;color:#595959;white-space:nowrap;transform-origin:100% 0;transform:rotate(-45deg)">福島</div>
<div style="left:1620.5px;top:805.4px;width:6.0px;height:52.8px;background:#5b9bd5;"></div>
<div style="left:1627.5px;top:800.6px;width:6.0px;height:57.6px;background:#ed7d31;"></div>
<div style="left:1634.5px;top:795.3px;width:6.0px;height:62.9px;background:#a5a5a5;"></div>
<div style="left:1641.5px;top:791.1px;width:6.0px;height:67.1px;background:#ffc000;"></div>
<div style="left:1648.5px;top:788.2px;width:6.0px;height:70.0px;background:#4472c4;"></div>
<div style="left:1655.5px;top:785.5px;width:6.0px;height:72.7px;background:#70ad47;"></div>
<div style="left:1662.5px;top:784.7px;width:6.0px;height:73.5px;background:#255e91;"></div>
<div style="left:1252.4px;top:875.0px;width:400px;height:24px;text-align:right;font-size:23.5px;line-height:24px;color:#595959;white-space:nowrap;transform-origin:100% 0;transform:rotate(-45deg)">茨城</div>
<div style="left:1679.7px;top:819.3px;width:6.0px;height:38.9px;background:#5b9bd5;"></div>
<div style="left:1686.7px;top:816.4px;width:6.0px;height:41.8px;background:#ed7d31;"></div>
<div style="left:1693.7px;top:814.1px;width:6.0px;height:44.1px;background:#a5a5a5;"></div>
<div style="left:1700.7px;top:812.3px;width:6.0px;height:45.9px;background:#ffc000;"></div>
<div style="left:1707.7px;top:810.6px;width:6.0px;height:47.6px;background:#4472c4;"></div>
<div style="left:1714.7px;top:809.4px;width:6.0px;height:48.8px;background:#70ad47;"></div>
<div style="left:1721.7px;top:808.9px;width:6.0px;height:49.3px;background:#255e91;"></div>
<div style="left:1311.6px;top:875.0px;width:400px;height:24px;text-align:right;font-size:23.5px;line-height:24px;color:#595959;white-space:nowrap;transform-origin:100% 0;transform:rotate(-45deg)">栃木</div>
<div style="left:1738.8px;top:817.4px;width:6.0px;height:40.8px;background:#5b9bd5;"></div>
<div style="left:1745.8px;top:815.0px;width:6.0px;height:43.2px;background:#ed7d31;"></div>
<div style="left:1752.8px;top:812.7px;width:6.0px;height:45.5px;background:#a5a5a5;"></div>
<div style="left:1759.8px;top:810.9px;width:6.0px;height:47.3px;background:#ffc000;"></div>
<div style="left:1766.8px;top:809.8px;width:6.0px;height:48.4px;background:#4472c4;"></div>
<div style="left:1773.8px;top:808.9px;width:6.0px;height:49.3px;background:#70ad47;"></div>
<div style="left:1780.8px;top:808.5px;width:6.0px;height:49.7px;background:#255e91;"></div>
<div style="left:1370.7px;top:875.0px;width:400px;height:24px;text-align:right;font-size:23.5px;line-height:24px;color:#595959;white-space:nowrap;transform-origin:100% 0;transform:rotate(-45deg)">群馬</div>
<div style="left:1798.0px;top:763.0px;width:6.0px;height:95.2px;background:#5b9bd5;"></div>
<div style="left:1805.0px;top:739.6px;width:6.0px;height:118.6px;background:#ed7d31;"></div>
<div style="left:1812.0px;top:724.9px;width:6.0px;height:133.3px;background:#a5a5a5;"></div>
<div style="left:1819.0px;top:713.9px;width:6.0px;height:144.3px;background:#ffc000;"></div>
<div style="left:1826.0px;top:700.9px;width:6.0px;height:157.3px;background:#4472c4;"></div>
<div style="left:1833.0px;top:692.1px;width:6.0px;height:166.1px;background:#70ad47;"></div>
<div style="left:1840.0px;top:687.7px;width:6.0px;height:170.5px;background:#255e91;"></div>
<div style="left:1429.9px;top:875.0px;width:400px;height:24px;text-align:right;font-size:23.5px;line-height:24px;color:#595959;white-space:nowrap;transform-origin:100% 0;transform:rotate(-45deg)">埼玉</div>
<div style="left:1857.2px;top:763.0px;width:6.0px;height:95.2px;background:#5b9bd5;"></div>
<div style="left:1864.2px;top:756.1px;width:6.0px;height:102.1px;background:#ed7d31;"></div>
<div style="left:1871.2px;top:741.7px;width:6.0px;height:116.5px;background:#a5a5a5;"></div>
<div style="left:1878.2px;top:731.5px;width:6.0px;height:126.7px;background:#ffc000;"></div>
<div style="left:1885.2px;top:721.9px;width:6.0px;height:136.3px;background:#4472c4;"></div>
<div style="left:1892.2px;top:715.6px;width:6.0px;height:142.6px;background:#70ad47;"></div>
<div style="left:1899.2px;top:712.6px;width:6.0px;height:145.6px;background:#255e91;"></div>
<div style="left:1489.1px;top:875.0px;width:400px;height:24px;text-align:right;font-size:23.5px;line-height:24px;color:#595959;white-space:nowrap;transform-origin:100% 0;transform:rotate(-45deg)">千葉</div>
<div style="left:1916.3px;top:577.3px;width:6.0px;height:280.9px;background:#5b9bd5;"></div>
<div style="left:1923.3px;top:571.3px;width:6.0px;height:286.9px;background:#ed7d31;"></div>
<div style="left:1930.3px;top:572.7px;width:6.0px;height:285.5px;background:#a5a5a5;"></div>
<div style="left:1937.3px;top:567.3px;width:6.0px;height:290.9px;background:#ffc000;"></div>
<div style="left:1944.3px;top:568.7px;width:6.0px;height:289.5px;background:#4472c4;"></div>
<div style="left:1951.3px;top:569.3px;width:6.0px;height:288.9px;background:#70ad47;"></div>
<div style="left:1958.3px;top:562.4px;width:6.0px;height:295.8px;background:#255e91;"></div>
<div style="left:1548.2px;top:875.0px;width:400px;height:24px;text-align:right;font-size:23.5px;line-height:24px;color:#595959;white-space:nowrap;transform-origin:100% 0;transform:rotate(-45deg)">東京</div>
<div style="left:1975.5px;top:723.5px;width:6.0px;height:134.7px;background:#5b9bd5;"></div>
<div style="left:1982.5px;top:700.8px;width:6.0px;height:157.4px;background:#ed7d31;"></div>
<div style="left:1989.5px;top:687.9px;width:6.0px;height:170.3px;background:#a5a5a5;"></div>
<div style="left:1996.5px;top:675.3px;width:6.0px;height:182.9px;background:#ffc000;"></div>
<div style="left:2003.5px;top:662.4px;width:6.0px;height:195.8px;background:#4472c4;"></div>
<div style="left:2010.5px;top:655.4px;width:6.0px;height:202.8px;background:#70ad47;"></div>
<div style="left:2017.5px;top:649.6px;width:6.0px;height:208.6px;background:#255e91;"></div>
<div style="left:1607.4px;top:875.0px;width:400px;height:24px;text-align:right;font-size:23.5px;line-height:24px;color:#595959;white-space:nowrap;transform-origin:100% 0;transform:rotate(-45deg)">神奈川</div>
<div style="left:1268.6px;top:997.0px;width:12.0px;height:12.0px;background:#5b9bd5;"></div>
<div style="left:1286.1px;top:996.5px;font-size:23.5px;line-height:23.5px;color:#595959;white-space:nowrap;transform:scaleY(1.07)">1970</div>
<div style="left:1358.0px;top:997.0px;width:12.0px;height:12.0px;background:#ed7d31;"></div>
<div style="left:1375.5px;top:996.5px;font-size:23.5px;line-height:23.5px;color:#595959;white-space:nowrap;transform:scaleY(1.07)">1975</div>
<div style="left:1447.4px;top:997.0px;width:12.0px;height:12.0px;background:#a5a5a5;"></div>
<div style="left:1464.9px;top:996.5px;font-size:23.5px;line-height:23.5px;color:#595959;white-space:nowrap;transform:scaleY(1.07)">1980</div>
<div style="left:1536.8px;top:997.0px;width:12.0px;height:12.0px;background:#ffc000;"></div>
<div style="left:1554.3px;top:996.5px;font-size:23.5px;line-height:23.5px;color:#595959;white-space:nowrap;transform:scaleY(1.07)">1985</div>
<div style="left:1626.2px;top:997.0px;width:12.0px;height:12.0px;background:#4472c4;"></div>
<div style="left:1643.7px;top:996.5px;font-size:23.5px;line-height:23.5px;color:#595959;white-space:nowrap;transform:scaleY(1.07)">1990</div>
<div style="left:1715.6px;top:997.0px;width:12.0px;height:12.0px;background:#70ad47;"></div>
<div style="left:1733.1px;top:996.5px;font-size:23.5px;line-height:23.5px;color:#595959;white-space:nowrap;transform:scaleY(1.07)">1995</div>
<div style="left:1805.0px;top:997.0px;width:12.0px;height:12.0px;background:#255e91;"></div>
<div style="left:1822.5px;top:996.5px;font-size:23.5px;line-height:23.5px;color:#595959;white-space:nowrap;transform:scaleY(1.07)">2000</div>
<div style="left:1102.5px;top:443.1px;width:16px;height:16px;box-sizing:border-box;border:2px solid #8c8c8c;border-radius:3px;background:#fff"></div>
<div style="left:1102.5px;top:743.0px;width:16px;height:16px;box-sizing:border-box;border:2px solid #8c8c8c;border-radius:3px;background:#fff"></div>
<div style="left:1102.5px;top:1045.2px;width:16px;height:16px;box-sizing:border-box;border:2px solid #8c8c8c;border-radius:3px;background:#fff"></div>
<div style="left:1581.0px;top:443.1px;width:16px;height:16px;box-sizing:border-box;border:2px solid #8c8c8c;border-radius:3px;background:#fff"></div>
<div style="left:1581.0px;top:1045.2px;width:16px;height:16px;box-sizing:border-box;border:2px solid #8c8c8c;border-radius:3px;background:#fff"></div>
<div style="left:2064.3px;top:443.1px;width:16px;height:16px;box-sizing:border-box;border:2px solid #8c8c8c;border-radius:3px;background:#fff"></div>
<div style="left:2064.3px;top:743.0px;width:16px;height:16px;box-sizing:border-box;border:2px solid #8c8c8c;border-radius:3px;background:#fff"></div>
<div style="left:2064.3px;top:1045.2px;width:16px;height:16px;box-sizing:border-box;border:2px solid #8c8c8c;border-radius:3px;background:#fff"></div>
<div style="left:2897.5px;top:372.0px;width:41.0px;height:1199.0px;background:#f3f3f3;"></div>
<div style="left:2895.5px;top:372.0px;width:2.0px;height:1199.0px;background:#b4b4b4;"></div>
<div style="left:2904.5px;top:541.5px;width:28.0px;height:999.5px;background:#e8e8e8;"></div>
<div style="left:2904.2px;top:374.0px;width:28.4px;height:27.0px;box-sizing:border-box;border:2px solid #c4c4c4;background:#fff;border-radius:3px 3px 0 0"></div>
<svg style="left:2910px;top:380px" width="18" height="14"><path d="M1.5 11.5H15.5L8.5 3.5Z" fill="#666e55"/></svg>
<div style="left:2904.2px;top:401.0px;width:28.4px;height:140.5px;box-sizing:border-box;border:2px solid #a8a8a8;background:#fff;border-top-width:3px"></div>
<div style="left:2904.2px;top:1541.0px;width:28.6px;height:28.5px;box-sizing:border-box;border:2px solid #c4c4c4;background:#fff;border-radius:0 0 3px 3px"></div>
<svg style="left:2910px;top:1547px" width="18" height="14"><path d="M1.5 3H15.5L8.5 11Z" fill="#666e55"/></svg>
<div style="left:1.0px;top:1571.0px;width:2938.0px;height:55.5px;background:#f3f3f3;"></div>
<div style="left:0.0px;top:1570.0px;width:2897.0px;height:2.0px;background:#c0c0c0;"></div>
<svg style="left:45px;top:1588px" width="80" height="22"><path d="M15 3.5V17.5L6.8 10.5Z" fill="#c4c4c4"/><path d="M64.5 3.5V17.5L72.5 10.5Z" fill="#c4c4c4"/></svg>
<div style="left:198.0px;top:1569.0px;width:139.0px;height:51.0px;background:#fff;"></div>
<div style="left:197.5px;top:1616.5px;width:140.0px;height:3.8px;background:#217346;"></div>
<div style="left:197.0px;top:1570.0px;width:2.0px;height:47.0px;background:#c4c4c4;"></div>
<div style="left:336.0px;top:1570.0px;width:2.0px;height:47.0px;background:#c4c4c4;"></div>
<div style="left:196.5px;width:140px;text-align:center;top:1583.0px;font-size:27px;line-height:27px;color:#217346;white-space:nowrap;font-weight:bold;transform:scaleY(1.05)">Sheet1</div>
<svg style="left:400px;top:1580px" width="38" height="38"><circle cx="19.5" cy="18.5" r="14" fill="none" stroke="#6a6a6a" stroke-width="2.6"/><path d="M19.5 10.5V26.5M11.5 18.5H27.5" stroke="#6a6a6a" stroke-width="3"/></svg>
<svg style="left:1415px;top:1588px" width="10" height="26"><circle cx="4.5" cy="3.0" r="1.8" fill="#888"/><circle cx="4.5" cy="11.5" r="1.8" fill="#888"/><circle cx="4.5" cy="20.0" r="1.8" fill="#888"/></svg>
<div style="left:1448.0px;top:1585.7px;width:1447.0px;height:28.6px;background:#e8e8e8;"></div>
<div style="left:1448.0px;top:1585.7px;width:30.0px;height:28.6px;box-sizing:border-box;border:2px solid #bdbdbd;background:#fff;border-radius:3px 0 0 3px"></div>
<svg style="left:1455px;top:1591px" width="16" height="18"><path d="M11.5 2V15.5L3.5 8.7Z" fill="#666e55"/></svg>
<div style="left:1476.5px;top:1585.7px;width:745.0px;height:28.6px;box-sizing:border-box;border:2px solid #bdbdbd;background:#fff;"></div>
<div style="left:2865.5px;top:1585.2px;width:30.0px;height:29.0px;box-sizing:border-box;border:2px solid #bdbdbd;background:#fff;border-radius:0 3px 3px 0"></div>
<svg style="left:2872px;top:1591px" width="16" height="18"><path d="M4 2V15.5L12 8.7Z" fill="#666e55"/></svg>
<div style="left:0.0px;top:1626.5px;width:2940.0px;height:43.5px;background:#217346;"></div>
<div style="left:19.0px;top:1639.0px;font-size:22px;line-height:22px;color:#e3f3e8;white-space:nowrap;letter-spacing:-0.5px">準備完了</div>
<div style="left:2524.0px;top:1649.5px;width:23.0px;height:2.2px;background:#e6efe9;"></div>
<div style="left:2559.6px;top:1649.5px;width:239.4px;height:2.2px;background:#e6efe9;"></div>
<div style="left:2675.5px;top:1641.0px;width:8.0px;height:19.0px;background:#e6efe9;"></div>
<div style="left:2811.8px;top:1648.5px;width:23.2px;height:2.2px;background:#e6efe9;"></div>
<div style="left:2822.3px;top:1637.0px;width:2.2px;height:23.0px;background:#e6efe9;"></div>
<div style="left:2861.0px;top:1637.5px;font-size:24.5px;line-height:24.5px;color:#e3f3e8;white-space:nowrap;transform:scaleY(1.1)">100%</div>
<div style="left:0.0px;top:0.0px;width:2940.0px;height:1.3px;background:#4a4a4a;"></div>
<div style="left:0.0px;top:0.0px;width:1.3px;height:1670.0px;background:#4a4a4a;"></div>
<div style="left:2938.2px;top:0.0px;width:1.8px;height:1670.0px;background:#3a3a3a;"></div>
<div style="left:0.0px;top:1668.8px;width:2940.0px;height:1.2px;background:#222;"></div>
</div></body></html>
